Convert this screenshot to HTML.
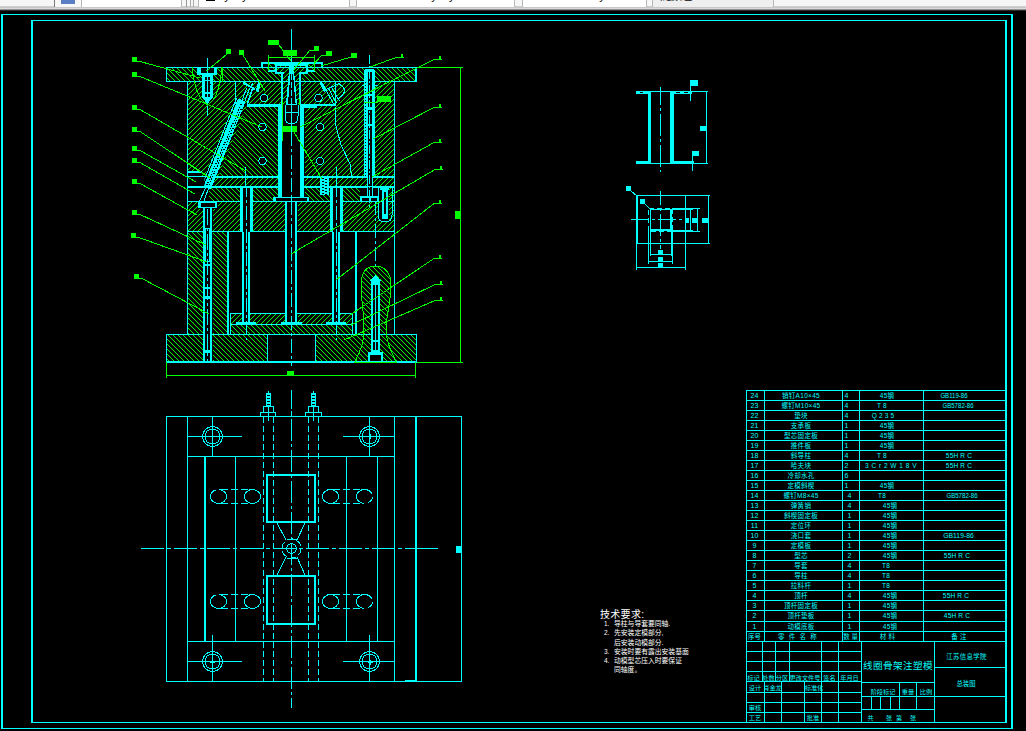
<!DOCTYPE html>
<html><head><meta charset="utf-8"><title>CAD</title>
<style>
html,body{margin:0;padding:0;background:#000;overflow:hidden}
body{width:1026px;height:731px;position:relative;font-family:"Liberation Sans","Noto Sans CJK SC",sans-serif}
#tb{position:absolute;left:0;top:0;width:1026px;height:11px;background:linear-gradient(#f6f6f6 0,#f6f6f6 6px,#a8a8a8 7px,#e4e4e4 8px,#d0d0d0 9px,#555 10px,#000 11px)}
#tb{overflow:hidden}#tb i{position:absolute;top:0;height:7px;background:#fff;border-left:1px solid #b8b8b8;border-right:1px solid #b8b8b8}#tb u,#tb b{position:absolute;top:0;height:7px}#tb span{position:absolute;top:-10px;font-size:11px;line-height:12px;color:#000;height:14px}
svg{position:absolute;left:0;top:0}
svg text{font-family:"Liberation Sans","Noto Sans CJK SC",sans-serif}
</style></head><body>
<div id="tb"><u style="left:54px;width:1px;background:#777"></u><u style="left:55px;width:26px;background:#f8f8f8"></u><i style="left:81px;width:99px"></i><u style="left:186px;width:1px;background:#999"></u><u style="left:190px;width:1px;background:#aaa"></u><u style="left:193px;width:1px;background:#aaa"></u><i style="left:198px;width:150px"></i><i style="left:356px;width:157px"></i><i style="left:522px;width:123px"></i><i style="left:652px;width:120px;background:#efefef"></i><b style="left:61px;top:0;width:14px;height:4px;background:#5b7fc4"></b><b style="left:206px;top:0;width:9px;height:1px;background:#000"></b><span style="left:217px">ByLayer</span><span style="left:424px">ByLayer</span><span style="left:592px">ByColor</span><span style="left:660px">随颜色</span></div>
<svg width="1026" height="731" viewBox="0 0 1026 731" shape-rendering="crispEdges">
<defs><clipPath id="h1"><path d="M166 67 L417 67 L417 82 L166 82Z M197 67 L217 67 L217 75 L213 75 L213 98 L207.5 104 L202 98 L202 75 L197 75Z M364 67 L375 67 L375 177 L373 177 L373 202 L367 202 L367 177 L364 177Z M275 64 L308 64 L308 74 L302 74 L302 105 L281 105 L281 74 L275 74Z M268 67 L276 67 L276 71 L268 71Z M307 67 L315 67 L315 71 L307 71Z" clip-rule="evenodd"/></clipPath>
<clipPath id="h2"><path d="M268 63 L276 63 L276 71 L268 71Z" clip-rule="evenodd"/></clipPath>
<clipPath id="h3"><path d="M307 63 L315 63 L315 71 L307 71Z" clip-rule="evenodd"/></clipPath>
<clipPath id="h4"><path d="M276 65 L307 65 L307 73 L300 73 L300 104 L282 104 L282 73 L276 73Z M290 65 L293 65 L296 104 L287 104Z" clip-rule="evenodd"/></clipPath>
<clipPath id="h5"><path d="M187 81 L395 81 L395 177 L187 177Z M197 67 L217 67 L217 75 L213 75 L213 98 L207.5 104 L202 98 L202 75 L197 75Z M364 67 L375 67 L375 177 L373 177 L373 202 L367 202 L367 177 L364 177Z M278 105 L305 105 L305 198 L278 198Z M235.21 98.08 L201.01 185.08 L210.79 188.92 L244.99 101.92Z M247 105 L279 105 L279 176 L218.5 176Z M187 171 L201 171 L201 177 L187 177Z M281 81 L302 81 L302 105 L281 105Z" clip-rule="evenodd"/></clipPath>
<clipPath id="h6"><path d="M247 105 L279 105 L279 176 L218.5 176Z M235.21 98.08 L201.01 185.08 L210.79 188.92 L244.99 101.92Z" clip-rule="evenodd"/></clipPath>
<clipPath id="h7"><path d="M212 177 L395 177 L395 187 L212 187Z M278 105 L305 105 L305 198 L278 198Z M364 67 L375 67 L375 177 L373 177 L373 202 L367 202 L367 177 L364 177Z M320 176 L329 176 L329 187 L320 187Z" clip-rule="evenodd"/></clipPath>
<clipPath id="h8"><path d="M209 187 L360 187 L360 202 L209 202Z M278 105 L305 105 L305 198 L278 198Z M240 187 L253 187 L253 232 L250 232 L250 325 L242 325 L242 232 L240 232Z M330 187 L343 187 L343 232 L340 232 L340 325 L332 325 L332 232 L330 232Z M273 197 L309 197 L309 202 L273 202Z M320 187 L329 187 L329 195 L320 195Z" clip-rule="evenodd"/></clipPath>
<clipPath id="h9"><path d="M379 187 L395 187 L395 202 L379 202Z M379 186 L389 186 L389 222 L379 222Z" clip-rule="evenodd"/></clipPath>
<clipPath id="h10"><path d="M187 202 L395 202 L395 232 L187 232Z M203 201 L213 201 L213 363 L203 363Z M198 201 L218 201 L218 209 L198 209Z M240 187 L253 187 L253 232 L250 232 L250 325 L242 325 L242 232 L240 232Z M330 187 L343 187 L343 232 L340 232 L340 325 L332 325 L332 232 L330 232Z M285 201 L298 201 L298 325 L285 325Z M379 186 L389 186 L389 222 L379 222Z" clip-rule="evenodd"/></clipPath>
<clipPath id="h11"><path d="M187 232 L229 232 L229 335 L187 335Z M203 201 L213 201 L213 363 L203 363Z" clip-rule="evenodd"/></clipPath>
<clipPath id="h12"><path d="M230 314 L352 314 L352 324 L230 324Z M240 187 L253 187 L253 232 L250 232 L250 325 L242 325 L242 232 L240 232Z M330 187 L343 187 L343 232 L340 232 L340 325 L332 325 L332 232 L330 232Z M285 201 L298 201 L298 325 L285 325Z" clip-rule="evenodd"/></clipPath>
<clipPath id="h13"><path d="M230 324 L352 324 L352 335 L230 335Z" clip-rule="evenodd"/></clipPath>
<clipPath id="h14"><path d="M166 335 L267 335 L267 363 L166 363Z M203 201 L213 201 L213 363 L203 363Z" clip-rule="evenodd"/></clipPath>
<clipPath id="h15"><path d="M316 335 L417 335 L417 363 L316 363Z M364 334 L386 334 L389 345 L397 364 L354 364 L361 345Z" clip-rule="evenodd"/></clipPath>
<clipPath id="hb"><path d="M375 266 C384 266 391 272 391 285 C391 300 387 312 386 328 C386 343 392 352 396 362 L355 362 C359 352 365 343 364 328 C364 312 361 300 361 285 C361 272 367 266 375 266Z M371 278 L380 278 L380 362 L371 362Z" clip-rule="evenodd"/></clipPath>
<clipPath id="bc"><path d="M190 95H262V190H204.5V166H190Z"/></clipPath></defs>
<rect x="1" y="14" width="2" height="715" fill="#0ff"/>
<rect x="1011" y="14" width="2" height="715" fill="#0ff"/>
<rect x="1" y="14" width="1012" height="1" fill="#0ff"/>
<rect x="1" y="728" width="1012" height="1" fill="#0ff"/>
<rect x="31" y="20" width="2" height="703" fill="#0ff"/>
<rect x="1005" y="20" width="2" height="703" fill="#0ff"/>
<rect x="31" y="20" width="976" height="1" fill="#0ff"/>
<rect x="31" y="722" width="976" height="1" fill="#0ff"/>
<rect x="746" y="390" width="260" height="1" fill="#0ff"/>
<rect x="746" y="400" width="260" height="1" fill="#0ff"/>
<rect x="746" y="410" width="260" height="1" fill="#0ff"/>
<rect x="746" y="420" width="260" height="1" fill="#0ff"/>
<rect x="746" y="430" width="260" height="1" fill="#0ff"/>
<rect x="746" y="440" width="260" height="1" fill="#0ff"/>
<rect x="746" y="450" width="260" height="1" fill="#0ff"/>
<rect x="746" y="460" width="260" height="1" fill="#0ff"/>
<rect x="746" y="470" width="260" height="1" fill="#0ff"/>
<rect x="746" y="480" width="260" height="1" fill="#0ff"/>
<rect x="746" y="490" width="260" height="1" fill="#0ff"/>
<rect x="746" y="500" width="260" height="1" fill="#0ff"/>
<rect x="746" y="510" width="260" height="1" fill="#0ff"/>
<rect x="746" y="520" width="260" height="1" fill="#0ff"/>
<rect x="746" y="530" width="260" height="1" fill="#0ff"/>
<rect x="746" y="540" width="260" height="1" fill="#0ff"/>
<rect x="746" y="550" width="260" height="1" fill="#0ff"/>
<rect x="746" y="560" width="260" height="1" fill="#0ff"/>
<rect x="746" y="570" width="260" height="1" fill="#0ff"/>
<rect x="746" y="580" width="260" height="1" fill="#0ff"/>
<rect x="746" y="590" width="260" height="1" fill="#0ff"/>
<rect x="746" y="600" width="260" height="1" fill="#0ff"/>
<rect x="746" y="610" width="260" height="1" fill="#0ff"/>
<rect x="746" y="621" width="260" height="1" fill="#0ff"/>
<rect x="746" y="631" width="260" height="1" fill="#0ff"/>
<rect x="746" y="641" width="260" height="1" fill="#0ff"/>
<rect x="746" y="390" width="1" height="252" fill="#0ff"/>
<rect x="764" y="390" width="1" height="252" fill="#0ff"/>
<rect x="842" y="390" width="1" height="252" fill="#0ff"/>
<rect x="859" y="390" width="1" height="252" fill="#0ff"/>
<rect x="923" y="390" width="1" height="252" fill="#0ff"/>
<text x="754.5" y="398.3" font-size="7" fill="#0ff" text-anchor="middle">24</text>
<text x="801" y="398.3" font-size="6.5" fill="#0ff" text-anchor="middle" letter-spacing="0.3">销钉A10×45</text>
<text x="846.5" y="398.3" font-size="7" fill="#0ff" text-anchor="middle">4</text>
<text x="887" y="398.3" font-size="6.5" fill="#0ff" text-anchor="middle" letter-spacing="0.2">45钢</text>
<text transform="translate(954,398.3) scale(0.78,1)" font-size="7.8" fill="#0ff" text-anchor="middle">GB119-86</text>
<text x="754.5" y="408.3" font-size="7" fill="#0ff" text-anchor="middle">23</text>
<text x="801" y="408.3" font-size="6.5" fill="#0ff" text-anchor="middle" letter-spacing="0.3">螺钉M10×45</text>
<text x="846.5" y="408.3" font-size="7" fill="#0ff" text-anchor="middle">4</text>
<text x="882" y="408.3" font-size="6.5" fill="#0ff" text-anchor="middle" letter-spacing="0.2">T 8</text>
<text transform="translate(958,408.3) scale(0.78,1)" font-size="7.8" fill="#0ff" text-anchor="middle">GB5782-86</text>
<text x="754.5" y="418.3" font-size="7" fill="#0ff" text-anchor="middle">22</text>
<text x="801" y="418.3" font-size="6.5" fill="#0ff" text-anchor="middle" letter-spacing="0.3">垫块</text>
<text x="846.5" y="418.3" font-size="7" fill="#0ff" text-anchor="middle">4</text>
<text x="883" y="418.3" font-size="6.5" fill="#0ff" text-anchor="middle" letter-spacing="0.2">Q 2 3 5</text>
<text x="959" y="418.3" font-size="6.5" fill="#0ff" text-anchor="middle" letter-spacing="0.2"></text>
<text x="754.5" y="428.3" font-size="7" fill="#0ff" text-anchor="middle">21</text>
<text x="801" y="428.3" font-size="6.5" fill="#0ff" text-anchor="middle" letter-spacing="0.3">支承板</text>
<text x="846.5" y="428.3" font-size="7" fill="#0ff" text-anchor="middle">1</text>
<text x="887" y="428.3" font-size="6.5" fill="#0ff" text-anchor="middle" letter-spacing="0.2">45钢</text>
<text x="959" y="428.3" font-size="6.5" fill="#0ff" text-anchor="middle" letter-spacing="0.2"></text>
<text x="754.5" y="438.3" font-size="7" fill="#0ff" text-anchor="middle">20</text>
<text x="801" y="438.3" font-size="6.5" fill="#0ff" text-anchor="middle" letter-spacing="0.3">型芯固定板</text>
<text x="846.5" y="438.3" font-size="7" fill="#0ff" text-anchor="middle">1</text>
<text x="887" y="438.3" font-size="6.5" fill="#0ff" text-anchor="middle" letter-spacing="0.2">45钢</text>
<text x="959" y="438.3" font-size="6.5" fill="#0ff" text-anchor="middle" letter-spacing="0.2"></text>
<text x="754.5" y="448.3" font-size="7" fill="#0ff" text-anchor="middle">19</text>
<text x="801" y="448.3" font-size="6.5" fill="#0ff" text-anchor="middle" letter-spacing="0.3">推件板</text>
<text x="846.5" y="448.3" font-size="7" fill="#0ff" text-anchor="middle">1</text>
<text x="887" y="448.3" font-size="6.5" fill="#0ff" text-anchor="middle" letter-spacing="0.2">45钢</text>
<text x="959" y="448.3" font-size="6.5" fill="#0ff" text-anchor="middle" letter-spacing="0.2"></text>
<text x="754.5" y="458.3" font-size="7" fill="#0ff" text-anchor="middle">18</text>
<text x="801" y="458.3" font-size="6.5" fill="#0ff" text-anchor="middle" letter-spacing="0.3">斜导柱</text>
<text x="846.5" y="458.3" font-size="7" fill="#0ff" text-anchor="middle">4</text>
<text x="882" y="458.3" font-size="6.5" fill="#0ff" text-anchor="middle" letter-spacing="0.2">T 8</text>
<text x="959" y="458.3" font-size="6.5" fill="#0ff" text-anchor="middle" letter-spacing="0.2">55H R C</text>
<text x="754.5" y="468.3" font-size="7" fill="#0ff" text-anchor="middle">17</text>
<text x="801" y="468.3" font-size="6.5" fill="#0ff" text-anchor="middle" letter-spacing="0.3">哈夫块</text>
<text x="846.5" y="468.3" font-size="7" fill="#0ff" text-anchor="middle">2</text>
<text x="891" y="468.3" font-size="6.5" fill="#0ff" text-anchor="middle" letter-spacing="0.5">3 C r 2 W 1 8 V</text>
<text x="959" y="468.3" font-size="6.5" fill="#0ff" text-anchor="middle" letter-spacing="0.2">55H R C</text>
<text x="754.5" y="478.3" font-size="7" fill="#0ff" text-anchor="middle">16</text>
<text x="801" y="478.3" font-size="6.5" fill="#0ff" text-anchor="middle" letter-spacing="0.3">冷却水孔</text>
<text x="846.5" y="478.3" font-size="7" fill="#0ff" text-anchor="middle">6</text>
<text x="887" y="478.3" font-size="6.5" fill="#0ff" text-anchor="middle" letter-spacing="0.2"></text>
<text x="959" y="478.3" font-size="6.5" fill="#0ff" text-anchor="middle" letter-spacing="0.2"></text>
<text x="754.5" y="488.3" font-size="7" fill="#0ff" text-anchor="middle">15</text>
<text x="801" y="488.3" font-size="6.5" fill="#0ff" text-anchor="middle" letter-spacing="0.3">定模斜楔</text>
<text x="846.5" y="488.3" font-size="7" fill="#0ff" text-anchor="middle">1</text>
<text x="887" y="488.3" font-size="6.5" fill="#0ff" text-anchor="middle" letter-spacing="0.2">45钢</text>
<text x="959" y="488.3" font-size="6.5" fill="#0ff" text-anchor="middle" letter-spacing="0.2"></text>
<text x="754.5" y="498.3" font-size="7" fill="#0ff" text-anchor="middle">14</text>
<text x="801" y="498.3" font-size="6.5" fill="#0ff" text-anchor="middle" letter-spacing="0.3">螺钉M8×45</text>
<text x="849.5" y="498.3" font-size="7" fill="#0ff" text-anchor="middle">4</text>
<text x="882" y="498.3" font-size="6.5" fill="#0ff" text-anchor="middle" letter-spacing="0.2">T8</text>
<text transform="translate(962,498.3) scale(0.78,1)" font-size="7.8" fill="#0ff" text-anchor="middle">GB5782-86</text>
<text x="754.5" y="508.3" font-size="7" fill="#0ff" text-anchor="middle">13</text>
<text x="801" y="508.3" font-size="6.5" fill="#0ff" text-anchor="middle" letter-spacing="0.3">弹簧销</text>
<text x="849.5" y="508.3" font-size="7" fill="#0ff" text-anchor="middle">4</text>
<text x="890" y="508.3" font-size="6.5" fill="#0ff" text-anchor="middle" letter-spacing="0.2">45钢</text>
<text x="959" y="508.3" font-size="6.5" fill="#0ff" text-anchor="middle" letter-spacing="0.2"></text>
<text x="754.5" y="518.3" font-size="7" fill="#0ff" text-anchor="middle">12</text>
<text x="801" y="518.3" font-size="6.5" fill="#0ff" text-anchor="middle" letter-spacing="0.3">斜楔固定板</text>
<text x="849.5" y="518.3" font-size="7" fill="#0ff" text-anchor="middle">1</text>
<text x="890" y="518.3" font-size="6.5" fill="#0ff" text-anchor="middle" letter-spacing="0.2">45钢</text>
<text x="959" y="518.3" font-size="6.5" fill="#0ff" text-anchor="middle" letter-spacing="0.2"></text>
<text x="754.5" y="528.3" font-size="7" fill="#0ff" text-anchor="middle">11</text>
<text x="801" y="528.3" font-size="6.5" fill="#0ff" text-anchor="middle" letter-spacing="0.3">定位环</text>
<text x="849.5" y="528.3" font-size="7" fill="#0ff" text-anchor="middle">1</text>
<text x="890" y="528.3" font-size="6.5" fill="#0ff" text-anchor="middle" letter-spacing="0.2">45钢</text>
<text x="959" y="528.3" font-size="6.5" fill="#0ff" text-anchor="middle" letter-spacing="0.2"></text>
<text x="754.5" y="538.3" font-size="7" fill="#0ff" text-anchor="middle">10</text>
<text x="801" y="538.3" font-size="6.5" fill="#0ff" text-anchor="middle" letter-spacing="0.3">浇口套</text>
<text x="849.5" y="538.3" font-size="7" fill="#0ff" text-anchor="middle">1</text>
<text x="890" y="538.3" font-size="6.5" fill="#0ff" text-anchor="middle" letter-spacing="0.2">45钢</text>
<text x="958.5" y="538.3" font-size="6.8" fill="#0ff" text-anchor="middle" letter-spacing="0">GB119-86</text>
<text x="754.5" y="548.3" font-size="7" fill="#0ff" text-anchor="middle">9</text>
<text x="801" y="548.3" font-size="6.5" fill="#0ff" text-anchor="middle" letter-spacing="0.3">定模板</text>
<text x="849.5" y="548.3" font-size="7" fill="#0ff" text-anchor="middle">1</text>
<text x="890" y="548.3" font-size="6.5" fill="#0ff" text-anchor="middle" letter-spacing="0.2">45钢</text>
<text x="959" y="548.3" font-size="6.5" fill="#0ff" text-anchor="middle" letter-spacing="0.2"></text>
<text x="754.5" y="558.3" font-size="7" fill="#0ff" text-anchor="middle">8</text>
<text x="801" y="558.3" font-size="6.5" fill="#0ff" text-anchor="middle" letter-spacing="0.3">型芯</text>
<text x="849.5" y="558.3" font-size="7" fill="#0ff" text-anchor="middle">2</text>
<text x="890" y="558.3" font-size="6.5" fill="#0ff" text-anchor="middle" letter-spacing="0.2">45钢</text>
<text x="957" y="558.3" font-size="6.5" fill="#0ff" text-anchor="middle" letter-spacing="0.2">55H R C</text>
<text x="754.5" y="568.3" font-size="7" fill="#0ff" text-anchor="middle">7</text>
<text x="801" y="568.3" font-size="6.5" fill="#0ff" text-anchor="middle" letter-spacing="0.3">导套</text>
<text x="849.5" y="568.3" font-size="7" fill="#0ff" text-anchor="middle">4</text>
<text x="886" y="568.3" font-size="6.5" fill="#0ff" text-anchor="middle" letter-spacing="0.2">T8</text>
<text x="959" y="568.3" font-size="6.5" fill="#0ff" text-anchor="middle" letter-spacing="0.2"></text>
<text x="754.5" y="578.3" font-size="7" fill="#0ff" text-anchor="middle">6</text>
<text x="801" y="578.3" font-size="6.5" fill="#0ff" text-anchor="middle" letter-spacing="0.3">导柱</text>
<text x="849.5" y="578.3" font-size="7" fill="#0ff" text-anchor="middle">4</text>
<text x="886" y="578.3" font-size="6.5" fill="#0ff" text-anchor="middle" letter-spacing="0.2">T8</text>
<text x="959" y="578.3" font-size="6.5" fill="#0ff" text-anchor="middle" letter-spacing="0.2"></text>
<text x="754.5" y="588.3" font-size="7" fill="#0ff" text-anchor="middle">5</text>
<text x="801" y="588.3" font-size="6.5" fill="#0ff" text-anchor="middle" letter-spacing="0.3">拉料杆</text>
<text x="849.5" y="588.3" font-size="7" fill="#0ff" text-anchor="middle">1</text>
<text x="886" y="588.3" font-size="6.5" fill="#0ff" text-anchor="middle" letter-spacing="0.2">T8</text>
<text x="959" y="588.3" font-size="6.5" fill="#0ff" text-anchor="middle" letter-spacing="0.2"></text>
<text x="754.5" y="598.3" font-size="7" fill="#0ff" text-anchor="middle">4</text>
<text x="801" y="598.3" font-size="6.5" fill="#0ff" text-anchor="middle" letter-spacing="0.3">顶杆</text>
<text x="849.5" y="598.3" font-size="7" fill="#0ff" text-anchor="middle">4</text>
<text x="890" y="598.3" font-size="6.5" fill="#0ff" text-anchor="middle" letter-spacing="0.2">45钢</text>
<text x="956" y="598.3" font-size="6.5" fill="#0ff" text-anchor="middle" letter-spacing="0.2">55H R C</text>
<text x="754.5" y="608.3" font-size="7" fill="#0ff" text-anchor="middle">3</text>
<text x="801" y="608.3" font-size="6.5" fill="#0ff" text-anchor="middle" letter-spacing="0.3">顶杆固定板</text>
<text x="849.5" y="608.3" font-size="7" fill="#0ff" text-anchor="middle">1</text>
<text x="890" y="608.3" font-size="6.5" fill="#0ff" text-anchor="middle" letter-spacing="0.2">45钢</text>
<text x="959" y="608.3" font-size="6.5" fill="#0ff" text-anchor="middle" letter-spacing="0.2"></text>
<text x="754.5" y="618.3" font-size="7" fill="#0ff" text-anchor="middle">2</text>
<text x="801" y="618.3" font-size="6.5" fill="#0ff" text-anchor="middle" letter-spacing="0.3">顶杆垫板</text>
<text x="849.5" y="618.3" font-size="7" fill="#0ff" text-anchor="middle">1</text>
<text x="890" y="618.3" font-size="6.5" fill="#0ff" text-anchor="middle" letter-spacing="0.2">45钢</text>
<text x="957" y="618.3" font-size="6.5" fill="#0ff" text-anchor="middle" letter-spacing="0.2">45H R C</text>
<text x="754.5" y="629.3" font-size="7" fill="#0ff" text-anchor="middle">1</text>
<text x="801" y="629.3" font-size="6.5" fill="#0ff" text-anchor="middle" letter-spacing="0.3">动模底板</text>
<text x="849.5" y="629.3" font-size="7" fill="#0ff" text-anchor="middle">1</text>
<text x="890" y="629.3" font-size="6.5" fill="#0ff" text-anchor="middle" letter-spacing="0.2">45钢</text>
<text x="959" y="629.3" font-size="6.5" fill="#0ff" text-anchor="middle" letter-spacing="0.2"></text>
<text x="754.5" y="639.3" font-size="6.4" fill="#0ff" text-anchor="middle">序号</text>
<text x="798" y="639.3" font-size="6.5" fill="#0ff" text-anchor="middle" letter-spacing="1.2">零 件 名 称</text>
<text x="850.5" y="639.3" font-size="6.4" fill="#0ff" text-anchor="middle">数 量</text>
<text x="887.5" y="639.3" font-size="6.5" fill="#0ff" text-anchor="middle" letter-spacing="0.2">材 料</text>
<text x="959" y="639.3" font-size="6.5" fill="#0ff" text-anchor="middle" letter-spacing="0.2">备  注</text>
<rect x="746" y="651" width="116" height="1" fill="#0ff"/>
<rect x="746" y="661" width="116" height="1" fill="#0ff"/>
<rect x="746" y="671" width="116" height="1" fill="#0ff"/>
<rect x="746" y="681" width="116" height="1" fill="#0ff"/>
<rect x="861" y="682" width="74" height="1" fill="#0ff"/>
<rect x="746" y="692" width="116" height="1" fill="#0ff"/>
<rect x="746" y="702" width="116" height="1" fill="#0ff"/>
<rect x="746" y="712" width="116" height="1" fill="#0ff"/>
<rect x="762" y="641" width="1" height="41" fill="#0ff"/>
<rect x="775" y="641" width="1" height="41" fill="#0ff"/>
<rect x="789" y="641" width="1" height="41" fill="#0ff"/>
<rect x="764" y="681" width="1" height="42" fill="#0ff"/>
<rect x="781" y="681" width="1" height="42" fill="#0ff"/>
<rect x="804" y="681" width="1" height="42" fill="#0ff"/>
<rect x="746" y="641" width="1" height="82" fill="#0ff"/>
<rect x="821" y="641" width="1" height="82" fill="#0ff"/>
<rect x="838" y="641" width="1" height="82" fill="#0ff"/>
<rect x="861" y="641" width="1" height="82" fill="#0ff"/>
<rect x="934" y="641" width="1" height="82" fill="#0ff"/>
<rect x="934" y="667" width="72" height="1" fill="#0ff"/>
<rect x="861" y="696" width="145" height="1" fill="#0ff"/>
<rect x="861" y="709" width="74" height="1" fill="#0ff"/>
<rect x="899" y="682" width="1" height="28" fill="#0ff"/>
<rect x="916" y="682" width="1" height="28" fill="#0ff"/>
<rect x="871" y="696" width="1" height="14" fill="#0ff"/>
<rect x="880" y="696" width="1" height="14" fill="#0ff"/>
<rect x="890" y="696" width="1" height="14" fill="#0ff"/>
<text x="753.5" y="679.5" font-size="6.2" fill="#0ff" text-anchor="middle">标记</text>
<text x="768.5" y="679.5" font-size="6.2" fill="#0ff" text-anchor="middle">处数</text>
<text x="782" y="679.5" font-size="6.2" fill="#0ff" text-anchor="middle">分区</text>
<text x="805" y="679.5" font-size="6.2" fill="#0ff" text-anchor="middle">更改文件号</text>
<text x="829.5" y="679.5" font-size="6.2" fill="#0ff" text-anchor="middle">签名</text>
<text x="849.5" y="679.5" font-size="6.2" fill="#0ff" text-anchor="middle">年月日</text>
<text x="755" y="690" font-size="6.2" fill="#0ff" text-anchor="middle">设计</text>
<text x="772.5" y="690" font-size="6.2" fill="#0ff" text-anchor="middle">肖金龙</text>
<text x="814" y="690" font-size="6.2" fill="#0ff" text-anchor="middle">标准化</text>
<text x="755" y="710" font-size="6.2" fill="#0ff" text-anchor="middle">审核</text>
<text x="755" y="720" font-size="6.2" fill="#0ff" text-anchor="middle">工艺</text>
<text x="813" y="720" font-size="6.2" fill="#0ff" text-anchor="middle">批准</text>
<text x="898" y="668.5" font-size="9.6" fill="#0ff" text-anchor="middle" letter-spacing="0.4">线圈骨架注塑模</text>
<text x="966.5" y="658.5" font-size="6.4" fill="#0ff" text-anchor="middle" letter-spacing="0.35">江苏信息学院</text>
<text x="966" y="685.5" font-size="6.3" fill="#0ff" text-anchor="middle">总装图</text>
<text x="883" y="694" font-size="6.2" fill="#0ff" text-anchor="middle">阶段标记</text>
<text x="908" y="694" font-size="6.2" fill="#0ff" text-anchor="middle">重量</text>
<text x="926" y="694" font-size="6.2" fill="#0ff" text-anchor="middle">比例</text>
<text x="870.5" y="720" font-size="6" fill="#0ff" text-anchor="middle">共</text>
<text x="889" y="720" font-size="6" fill="#0ff" text-anchor="middle">张</text>
<text x="899" y="720" font-size="6" fill="#0ff" text-anchor="middle">第</text>
<text x="913" y="720" font-size="6" fill="#0ff" text-anchor="middle">张</text>
<text x="600" y="618" font-size="10" fill="#fff" letter-spacing="0.3">技术要求:</text>
<text x="604" y="626.3" font-size="6.5" fill="#fff">1.</text>
<text x="614" y="626.3" font-size="6.8" fill="#fff">导柱与导套要同轴.</text>
<text x="604" y="635.4" font-size="6.5" fill="#fff">2.</text>
<text x="614" y="635.4" font-size="6.8" fill="#fff">先安装定模部分,</text>
<text x="614" y="644.5" font-size="6.8" fill="#fff">后安装动模部分.</text>
<text x="604" y="653.6" font-size="6.5" fill="#fff">3.</text>
<text x="614" y="653.6" font-size="6.8" fill="#fff">安装时要有露出安装基面</text>
<text x="604" y="662.7" font-size="6.5" fill="#fff">4.</text>
<text x="614" y="662.7" font-size="6.8" fill="#fff">动模型芯压入时要保证</text>
<text x="614" y="671.8" font-size="6.8" fill="#fff">同轴度。</text>
<rect x="166" y="416" width="296" height="1" fill="#0ff"/>
<rect x="166" y="681" width="296" height="1" fill="#0ff"/>
<rect x="166" y="416" width="1" height="266" fill="#0ff"/>
<rect x="461" y="416" width="1" height="266" fill="#0ff"/>
<rect x="187" y="416" width="1" height="266" fill="#0ff"/>
<rect x="394" y="416" width="1" height="266" fill="#0ff"/>
<rect x="415" y="416" width="2" height="266" fill="#0ff"/>
<rect x="187" y="456" width="208" height="1" fill="#0ff"/>
<rect x="187" y="641" width="208" height="1" fill="#0ff"/>
<rect x="204" y="456" width="2" height="186" fill="#0ff"/>
<rect x="235" y="456" width="1" height="186" fill="#0ff"/>
<rect x="346" y="456" width="1" height="186" fill="#0ff"/>
<rect x="377" y="456" width="1" height="186" fill="#0ff"/>
<rect x="405" y="680" width="11" height="2" fill="#0ff"/>
<rect x="456" y="546" width="5" height="7" fill="#0ff"/>
<circle cx="212.5" cy="436.5" r="10" fill="none" stroke="#0ff" stroke-width="1"/>
<circle cx="212.5" cy="436.5" r="7.6" fill="none" stroke="#0ff" stroke-width="1"/>
<rect x="210" y="436" width="5" height="1" fill="#0ff"/>
<rect x="212" y="434" width="1" height="5" fill="#0ff"/>
<circle cx="212.5" cy="661.5" r="10" fill="none" stroke="#0ff" stroke-width="1"/>
<circle cx="212.5" cy="661.5" r="7.6" fill="none" stroke="#0ff" stroke-width="1"/>
<rect x="210" y="662" width="5" height="1" fill="#0ff"/>
<rect x="212" y="660" width="1" height="5" fill="#0ff"/>
<circle cx="369.5" cy="436.5" r="10" fill="none" stroke="#0ff" stroke-width="1"/>
<circle cx="369.5" cy="436.5" r="7.6" fill="none" stroke="#0ff" stroke-width="1"/>
<rect x="368" y="436" width="5" height="1" fill="#0ff"/>
<rect x="370" y="434" width="1" height="5" fill="#0ff"/>
<circle cx="369.5" cy="661.5" r="10" fill="none" stroke="#0ff" stroke-width="1"/>
<circle cx="369.5" cy="661.5" r="7.6" fill="none" stroke="#0ff" stroke-width="1"/>
<rect x="368" y="662" width="5" height="1" fill="#0ff"/>
<rect x="370" y="660" width="1" height="5" fill="#0ff"/>
<rect x="187" y="436" width="55" height="1" fill="#0ff"/>
<rect x="343" y="436" width="52" height="1" fill="#0ff"/>
<rect x="187" y="661" width="55" height="1" fill="#0ff"/>
<rect x="343" y="661" width="52" height="1" fill="#0ff"/>
<rect x="212" y="416" width="1" height="41" fill="#0ff"/>
<rect x="369" y="416" width="1" height="41" fill="#0ff"/>
<rect x="212" y="635" width="1" height="47" fill="#0ff"/>
<rect x="369" y="635" width="1" height="47" fill="#0ff"/>
<rect x="263" y="417" width="1" height="6" fill="#0ff"/>
<rect x="263" y="426" width="1" height="6" fill="#0ff"/>
<rect x="263" y="435" width="1" height="6" fill="#0ff"/>
<rect x="263" y="444" width="1" height="6" fill="#0ff"/>
<rect x="263" y="453" width="1" height="6" fill="#0ff"/>
<rect x="263" y="462" width="1" height="6" fill="#0ff"/>
<rect x="263" y="471" width="1" height="6" fill="#0ff"/>
<rect x="263" y="480" width="1" height="6" fill="#0ff"/>
<rect x="263" y="489" width="1" height="6" fill="#0ff"/>
<rect x="263" y="498" width="1" height="6" fill="#0ff"/>
<rect x="263" y="507" width="1" height="6" fill="#0ff"/>
<rect x="263" y="516" width="1" height="6" fill="#0ff"/>
<rect x="263" y="525" width="1" height="6" fill="#0ff"/>
<rect x="263" y="534" width="1" height="6" fill="#0ff"/>
<rect x="263" y="543" width="1" height="6" fill="#0ff"/>
<rect x="263" y="552" width="1" height="6" fill="#0ff"/>
<rect x="263" y="561" width="1" height="6" fill="#0ff"/>
<rect x="263" y="570" width="1" height="6" fill="#0ff"/>
<rect x="263" y="579" width="1" height="6" fill="#0ff"/>
<rect x="263" y="588" width="1" height="6" fill="#0ff"/>
<rect x="263" y="597" width="1" height="6" fill="#0ff"/>
<rect x="263" y="606" width="1" height="6" fill="#0ff"/>
<rect x="263" y="615" width="1" height="6" fill="#0ff"/>
<rect x="263" y="624" width="1" height="6" fill="#0ff"/>
<rect x="263" y="633" width="1" height="6" fill="#0ff"/>
<rect x="263" y="642" width="1" height="6" fill="#0ff"/>
<rect x="263" y="651" width="1" height="6" fill="#0ff"/>
<rect x="263" y="660" width="1" height="6" fill="#0ff"/>
<rect x="263" y="669" width="1" height="6" fill="#0ff"/>
<rect x="263" y="678" width="1" height="3" fill="#0ff"/>
<rect x="273" y="417" width="1" height="6" fill="#0ff"/>
<rect x="273" y="426" width="1" height="6" fill="#0ff"/>
<rect x="273" y="435" width="1" height="6" fill="#0ff"/>
<rect x="273" y="444" width="1" height="6" fill="#0ff"/>
<rect x="273" y="453" width="1" height="6" fill="#0ff"/>
<rect x="273" y="462" width="1" height="6" fill="#0ff"/>
<rect x="273" y="471" width="1" height="6" fill="#0ff"/>
<rect x="273" y="480" width="1" height="6" fill="#0ff"/>
<rect x="273" y="489" width="1" height="6" fill="#0ff"/>
<rect x="273" y="498" width="1" height="6" fill="#0ff"/>
<rect x="273" y="507" width="1" height="6" fill="#0ff"/>
<rect x="273" y="516" width="1" height="6" fill="#0ff"/>
<rect x="273" y="525" width="1" height="6" fill="#0ff"/>
<rect x="273" y="534" width="1" height="6" fill="#0ff"/>
<rect x="273" y="543" width="1" height="6" fill="#0ff"/>
<rect x="273" y="552" width="1" height="6" fill="#0ff"/>
<rect x="273" y="561" width="1" height="6" fill="#0ff"/>
<rect x="273" y="570" width="1" height="6" fill="#0ff"/>
<rect x="273" y="579" width="1" height="6" fill="#0ff"/>
<rect x="273" y="588" width="1" height="6" fill="#0ff"/>
<rect x="273" y="597" width="1" height="6" fill="#0ff"/>
<rect x="273" y="606" width="1" height="6" fill="#0ff"/>
<rect x="273" y="615" width="1" height="6" fill="#0ff"/>
<rect x="273" y="624" width="1" height="6" fill="#0ff"/>
<rect x="273" y="633" width="1" height="6" fill="#0ff"/>
<rect x="273" y="642" width="1" height="6" fill="#0ff"/>
<rect x="273" y="651" width="1" height="6" fill="#0ff"/>
<rect x="273" y="660" width="1" height="6" fill="#0ff"/>
<rect x="273" y="669" width="1" height="6" fill="#0ff"/>
<rect x="273" y="678" width="1" height="3" fill="#0ff"/>
<rect x="308" y="417" width="1" height="6" fill="#0ff"/>
<rect x="308" y="426" width="1" height="6" fill="#0ff"/>
<rect x="308" y="435" width="1" height="6" fill="#0ff"/>
<rect x="308" y="444" width="1" height="6" fill="#0ff"/>
<rect x="308" y="453" width="1" height="6" fill="#0ff"/>
<rect x="308" y="462" width="1" height="6" fill="#0ff"/>
<rect x="308" y="471" width="1" height="6" fill="#0ff"/>
<rect x="308" y="480" width="1" height="6" fill="#0ff"/>
<rect x="308" y="489" width="1" height="6" fill="#0ff"/>
<rect x="308" y="498" width="1" height="6" fill="#0ff"/>
<rect x="308" y="507" width="1" height="6" fill="#0ff"/>
<rect x="308" y="516" width="1" height="6" fill="#0ff"/>
<rect x="308" y="525" width="1" height="6" fill="#0ff"/>
<rect x="308" y="534" width="1" height="6" fill="#0ff"/>
<rect x="308" y="543" width="1" height="6" fill="#0ff"/>
<rect x="308" y="552" width="1" height="6" fill="#0ff"/>
<rect x="308" y="561" width="1" height="6" fill="#0ff"/>
<rect x="308" y="570" width="1" height="6" fill="#0ff"/>
<rect x="308" y="579" width="1" height="6" fill="#0ff"/>
<rect x="308" y="588" width="1" height="6" fill="#0ff"/>
<rect x="308" y="597" width="1" height="6" fill="#0ff"/>
<rect x="308" y="606" width="1" height="6" fill="#0ff"/>
<rect x="308" y="615" width="1" height="6" fill="#0ff"/>
<rect x="308" y="624" width="1" height="6" fill="#0ff"/>
<rect x="308" y="633" width="1" height="6" fill="#0ff"/>
<rect x="308" y="642" width="1" height="6" fill="#0ff"/>
<rect x="308" y="651" width="1" height="6" fill="#0ff"/>
<rect x="308" y="660" width="1" height="6" fill="#0ff"/>
<rect x="308" y="669" width="1" height="6" fill="#0ff"/>
<rect x="308" y="678" width="1" height="3" fill="#0ff"/>
<rect x="318" y="417" width="1" height="6" fill="#0ff"/>
<rect x="318" y="426" width="1" height="6" fill="#0ff"/>
<rect x="318" y="435" width="1" height="6" fill="#0ff"/>
<rect x="318" y="444" width="1" height="6" fill="#0ff"/>
<rect x="318" y="453" width="1" height="6" fill="#0ff"/>
<rect x="318" y="462" width="1" height="6" fill="#0ff"/>
<rect x="318" y="471" width="1" height="6" fill="#0ff"/>
<rect x="318" y="480" width="1" height="6" fill="#0ff"/>
<rect x="318" y="489" width="1" height="6" fill="#0ff"/>
<rect x="318" y="498" width="1" height="6" fill="#0ff"/>
<rect x="318" y="507" width="1" height="6" fill="#0ff"/>
<rect x="318" y="516" width="1" height="6" fill="#0ff"/>
<rect x="318" y="525" width="1" height="6" fill="#0ff"/>
<rect x="318" y="534" width="1" height="6" fill="#0ff"/>
<rect x="318" y="543" width="1" height="6" fill="#0ff"/>
<rect x="318" y="552" width="1" height="6" fill="#0ff"/>
<rect x="318" y="561" width="1" height="6" fill="#0ff"/>
<rect x="318" y="570" width="1" height="6" fill="#0ff"/>
<rect x="318" y="579" width="1" height="6" fill="#0ff"/>
<rect x="318" y="588" width="1" height="6" fill="#0ff"/>
<rect x="318" y="597" width="1" height="6" fill="#0ff"/>
<rect x="318" y="606" width="1" height="6" fill="#0ff"/>
<rect x="318" y="615" width="1" height="6" fill="#0ff"/>
<rect x="318" y="624" width="1" height="6" fill="#0ff"/>
<rect x="318" y="633" width="1" height="6" fill="#0ff"/>
<rect x="318" y="642" width="1" height="6" fill="#0ff"/>
<rect x="318" y="651" width="1" height="6" fill="#0ff"/>
<rect x="318" y="660" width="1" height="6" fill="#0ff"/>
<rect x="318" y="669" width="1" height="6" fill="#0ff"/>
<rect x="318" y="678" width="1" height="3" fill="#0ff"/>
<rect x="291" y="390" width="1" height="19" fill="#0ff"/>
<rect x="291" y="411" width="1" height="6" fill="#0ff"/>
<rect x="291" y="419" width="1" height="22" fill="#0ff"/>
<rect x="291" y="444" width="1" height="3" fill="#0ff"/>
<rect x="291" y="450" width="1" height="22" fill="#0ff"/>
<rect x="291" y="475" width="1" height="3" fill="#0ff"/>
<rect x="291" y="481" width="1" height="22" fill="#0ff"/>
<rect x="291" y="506" width="1" height="3" fill="#0ff"/>
<rect x="291" y="512" width="1" height="22" fill="#0ff"/>
<rect x="291" y="537" width="1" height="3" fill="#0ff"/>
<rect x="291" y="543" width="1" height="22" fill="#0ff"/>
<rect x="291" y="568" width="1" height="3" fill="#0ff"/>
<rect x="291" y="574" width="1" height="22" fill="#0ff"/>
<rect x="291" y="599" width="1" height="3" fill="#0ff"/>
<rect x="291" y="605" width="1" height="22" fill="#0ff"/>
<rect x="291" y="630" width="1" height="3" fill="#0ff"/>
<rect x="291" y="636" width="1" height="22" fill="#0ff"/>
<rect x="291" y="661" width="1" height="3" fill="#0ff"/>
<rect x="291" y="667" width="1" height="22" fill="#0ff"/>
<rect x="291" y="692" width="1" height="3" fill="#0ff"/>
<rect x="291" y="698" width="1" height="10" fill="#0ff"/>
<rect x="141" y="548" width="23" height="1" fill="#0ff"/>
<rect x="167" y="548" width="4" height="1" fill="#0ff"/>
<rect x="174" y="548" width="23" height="1" fill="#0ff"/>
<rect x="200" y="548" width="4" height="1" fill="#0ff"/>
<rect x="207" y="548" width="23" height="1" fill="#0ff"/>
<rect x="233" y="548" width="4" height="1" fill="#0ff"/>
<rect x="240" y="548" width="23" height="1" fill="#0ff"/>
<rect x="266" y="548" width="4" height="1" fill="#0ff"/>
<rect x="273" y="548" width="23" height="1" fill="#0ff"/>
<rect x="299" y="548" width="4" height="1" fill="#0ff"/>
<rect x="306" y="548" width="23" height="1" fill="#0ff"/>
<rect x="332" y="548" width="4" height="1" fill="#0ff"/>
<rect x="339" y="548" width="23" height="1" fill="#0ff"/>
<rect x="365" y="548" width="4" height="1" fill="#0ff"/>
<rect x="372" y="548" width="23" height="1" fill="#0ff"/>
<rect x="398" y="548" width="4" height="1" fill="#0ff"/>
<rect x="405" y="548" width="23" height="1" fill="#0ff"/>
<rect x="431" y="548" width="4" height="1" fill="#0ff"/>
<rect x="417" y="548" width="21" height="1" fill="#0ff"/>
<rect x="266" y="474" width="2" height="49" fill="#0ff"/>
<rect x="314" y="474" width="2" height="49" fill="#0ff"/>
<rect x="266" y="474" width="50" height="2" fill="#0ff"/>
<rect x="266" y="521" width="50" height="2" fill="#0ff"/>
<rect x="266" y="575" width="2" height="50" fill="#0ff"/>
<rect x="314" y="575" width="2" height="50" fill="#0ff"/>
<rect x="266" y="575" width="50" height="2" fill="#0ff"/>
<rect x="266" y="623" width="50" height="2" fill="#0ff"/>
<circle cx="291.5" cy="548.5" r="4.8" fill="none" stroke="#0ff" stroke-width="1"/>
<circle cx="291.5" cy="548.5" r="9.6" fill="none" stroke="#0ff" stroke-width="1" stroke-dasharray="7 3"/>
<line x1="277" y1="523" x2="286" y2="540" stroke="#0ff" stroke-width="1"/>
<line x1="305" y1="523" x2="297" y2="540" stroke="#0ff" stroke-width="1"/>
<line x1="277" y1="575" x2="286" y2="557" stroke="#0ff" stroke-width="1"/>
<line x1="305" y1="575" x2="297" y2="557" stroke="#0ff" stroke-width="1"/>
<rect x="287" y="539" width="10" height="1" fill="#0ff"/>
<rect x="287" y="558" width="10" height="1" fill="#0ff"/>
<ellipse cx="218.5" cy="496.5" rx="8" ry="7" fill="none" stroke="#0ff" stroke-width="1" stroke-dasharray="32 4 11 0"/>
<ellipse cx="252.5" cy="496.5" rx="8" ry="7" fill="none" stroke="#0ff" stroke-width="1"/>
<rect x="221" y="489" width="7" height="1" fill="#0ff"/>
<rect x="231" y="489" width="7" height="1" fill="#0ff"/>
<rect x="241" y="489" width="7" height="1" fill="#0ff"/>
<rect x="221" y="503" width="7" height="1" fill="#0ff"/>
<rect x="231" y="503" width="7" height="1" fill="#0ff"/>
<rect x="241" y="503" width="7" height="1" fill="#0ff"/>
<ellipse cx="330.5" cy="496.5" rx="8" ry="7" fill="none" stroke="#0ff" stroke-width="1"/>
<ellipse cx="364.5" cy="496.5" rx="8" ry="7" fill="none" stroke="#0ff" stroke-width="1" stroke-dasharray="8 4 32 3"/>
<rect x="333" y="489" width="7" height="1" fill="#0ff"/>
<rect x="343" y="489" width="7" height="1" fill="#0ff"/>
<rect x="353" y="489" width="7" height="1" fill="#0ff"/>
<rect x="333" y="503" width="7" height="1" fill="#0ff"/>
<rect x="343" y="503" width="7" height="1" fill="#0ff"/>
<rect x="353" y="503" width="7" height="1" fill="#0ff"/>
<ellipse cx="218.5" cy="601.5" rx="8" ry="7" fill="none" stroke="#0ff" stroke-width="1" stroke-dasharray="32 4 11 0"/>
<ellipse cx="252.5" cy="601.5" rx="8" ry="7" fill="none" stroke="#0ff" stroke-width="1"/>
<rect x="221" y="594" width="7" height="1" fill="#0ff"/>
<rect x="231" y="594" width="7" height="1" fill="#0ff"/>
<rect x="241" y="594" width="7" height="1" fill="#0ff"/>
<rect x="221" y="608" width="7" height="1" fill="#0ff"/>
<rect x="231" y="608" width="7" height="1" fill="#0ff"/>
<rect x="241" y="608" width="7" height="1" fill="#0ff"/>
<ellipse cx="330.5" cy="601.5" rx="8" ry="7" fill="none" stroke="#0ff" stroke-width="1"/>
<ellipse cx="364.5" cy="601.5" rx="8" ry="7" fill="none" stroke="#0ff" stroke-width="1" stroke-dasharray="8 4 32 3"/>
<rect x="333" y="594" width="7" height="1" fill="#0ff"/>
<rect x="343" y="594" width="7" height="1" fill="#0ff"/>
<rect x="353" y="594" width="7" height="1" fill="#0ff"/>
<rect x="333" y="608" width="7" height="1" fill="#0ff"/>
<rect x="343" y="608" width="7" height="1" fill="#0ff"/>
<rect x="353" y="608" width="7" height="1" fill="#0ff"/>
<rect x="260" y="412" width="16" height="1" fill="#0ff"/>
<rect x="260" y="416" width="16" height="1" fill="#0ff"/>
<rect x="260" y="412" width="1" height="5" fill="#0ff"/>
<rect x="275" y="412" width="1" height="5" fill="#0ff"/>
<rect x="263" y="406" width="11" height="1" fill="#0ff"/>
<rect x="263" y="412" width="11" height="1" fill="#0ff"/>
<rect x="263" y="406" width="1" height="7" fill="#0ff"/>
<rect x="273" y="406" width="1" height="7" fill="#0ff"/>
<rect x="266" y="393" width="5" height="13" fill="#0ff"/>
<rect x="268" y="391" width="1" height="30" fill="#0ff"/>
<rect x="267" y="395" width="3" height="1" fill="#000"/>
<rect x="267" y="398" width="3" height="1" fill="#000"/>
<rect x="267" y="401" width="3" height="1" fill="#000"/>
<rect x="267" y="404" width="3" height="1" fill="#000"/>
<rect x="305" y="412" width="17" height="1" fill="#0ff"/>
<rect x="305" y="416" width="17" height="1" fill="#0ff"/>
<rect x="305" y="412" width="1" height="5" fill="#0ff"/>
<rect x="321" y="412" width="1" height="5" fill="#0ff"/>
<rect x="308" y="406" width="11" height="1" fill="#0ff"/>
<rect x="308" y="412" width="11" height="1" fill="#0ff"/>
<rect x="308" y="406" width="1" height="7" fill="#0ff"/>
<rect x="318" y="406" width="1" height="7" fill="#0ff"/>
<rect x="311" y="393" width="5" height="13" fill="#0ff"/>
<rect x="313" y="391" width="1" height="30" fill="#0ff"/>
<rect x="312" y="395" width="3" height="1" fill="#000"/>
<rect x="312" y="398" width="3" height="1" fill="#000"/>
<rect x="312" y="401" width="3" height="1" fill="#000"/>
<rect x="312" y="404" width="3" height="1" fill="#000"/>
<rect x="636" y="91" width="72" height="1" fill="#0ff"/>
<rect x="636" y="91" width="15" height="3" fill="#0ff"/>
<rect x="670" y="91" width="22" height="3" fill="#0ff"/>
<rect x="640" y="92" width="3" height="1" fill="#000"/>
<rect x="676" y="92" width="4" height="1" fill="#000"/>
<rect x="684" y="92" width="4" height="1" fill="#000"/>
<rect x="636" y="163" width="72" height="1" fill="#0ff"/>
<rect x="636" y="161" width="15" height="3" fill="#0ff"/>
<rect x="670" y="161" width="24" height="3" fill="#0ff"/>
<rect x="648" y="91" width="3" height="73" fill="#0ff"/>
<rect x="670" y="91" width="4" height="73" fill="#0ff"/>
<rect x="660" y="87" width="1" height="18" fill="#0ff"/>
<rect x="660" y="108" width="1" height="3" fill="#0ff"/>
<rect x="660" y="114" width="1" height="22" fill="#0ff"/>
<rect x="660" y="139" width="1" height="3" fill="#0ff"/>
<rect x="660" y="145" width="1" height="22" fill="#0ff"/>
<rect x="660" y="170" width="1" height="2" fill="#0ff"/>
<rect x="706" y="91" width="1" height="73" fill="#0ff"/>
<rect x="690" y="80" width="8" height="6" fill="#0ff"/>
<rect x="690" y="86" width="1" height="15" fill="#0ff"/>
<rect x="700" y="126" width="6" height="5" fill="#0ff"/>
<rect x="692" y="151" width="7" height="5" fill="#0ff"/>
<rect x="692" y="156" width="1" height="15" fill="#0ff"/>
<rect x="636" y="195" width="50" height="1" fill="#0ff"/>
<rect x="636" y="243" width="50" height="1" fill="#0ff"/>
<rect x="636" y="195" width="1" height="49" fill="#0ff"/>
<rect x="685" y="195" width="1" height="49" fill="#0ff"/>
<rect x="637" y="195" width="1" height="49" fill="#0ff"/>
<rect x="685" y="195" width="25" height="1" fill="#0ff"/>
<rect x="685" y="243" width="25" height="1" fill="#0ff"/>
<rect x="708" y="195" width="1" height="49" fill="#0ff"/>
<rect x="702" y="218" width="6" height="5" fill="#0ff"/>
<rect x="650" y="209" width="22" height="1" fill="#0ff"/>
<rect x="650" y="230" width="22" height="1" fill="#0ff"/>
<rect x="650" y="209" width="1" height="22" fill="#0ff"/>
<rect x="671" y="209" width="1" height="22" fill="#0ff"/>
<rect x="670" y="209" width="1" height="22" fill="#0ff"/>
<rect x="650" y="229" width="22" height="1" fill="#0ff"/>
<polygon points="648.5,208.5 672.5,208.5 672.5,231.5 648.5,231.5" fill="none" stroke="#0ff" stroke-width="1" stroke-dasharray="5 3"/>
<rect x="672" y="208" width="28" height="1" fill="#0ff"/>
<rect x="671" y="209" width="22" height="1" fill="#0ff"/>
<rect x="671" y="230" width="22" height="1" fill="#0ff"/>
<rect x="672" y="231" width="28" height="1" fill="#0ff"/>
<rect x="690" y="209" width="1" height="22" fill="#0ff"/>
<rect x="697" y="208" width="1" height="24" fill="#0ff"/>
<rect x="686" y="218" width="3" height="5" fill="#0ff"/>
<rect x="692" y="218" width="5" height="5" fill="#0ff"/>
<rect x="660" y="191" width="1" height="14" fill="#0ff"/>
<rect x="660" y="208" width="1" height="3" fill="#0ff"/>
<rect x="660" y="214" width="1" height="22" fill="#0ff"/>
<rect x="660" y="239" width="1" height="3" fill="#0ff"/>
<rect x="660" y="245" width="1" height="4" fill="#0ff"/>
<rect x="631" y="219" width="18" height="1" fill="#0ff"/>
<rect x="652" y="219" width="3" height="1" fill="#0ff"/>
<rect x="658" y="219" width="18" height="1" fill="#0ff"/>
<rect x="679" y="219" width="3" height="1" fill="#0ff"/>
<rect x="685" y="219" width="1" height="1" fill="#0ff"/>
<rect x="636" y="243" width="1" height="27" fill="#0ff"/>
<rect x="685" y="243" width="1" height="27" fill="#0ff"/>
<rect x="648" y="231" width="1" height="33" fill="#0ff"/>
<rect x="672" y="231" width="1" height="33" fill="#0ff"/>
<rect x="650" y="230" width="1" height="26" fill="#0ff"/>
<rect x="671" y="230" width="1" height="26" fill="#0ff"/>
<rect x="650" y="254" width="22" height="1" fill="#0ff"/>
<rect x="648" y="261" width="25" height="1" fill="#0ff"/>
<rect x="636" y="267" width="50" height="1" fill="#0ff"/>
<rect x="658" y="250" width="5" height="4" fill="#0ff"/>
<rect x="658" y="257" width="5" height="4" fill="#0ff"/>
<rect x="658" y="263" width="5" height="4" fill="#0ff"/>
<rect x="626" y="186" width="5" height="5" fill="#0ff"/>
<line x1="631" y1="191" x2="637" y2="196" stroke="#0ff" stroke-width="1"/>
<rect x="640" y="199" width="5" height="5" fill="#0ff"/>
<line x1="645" y1="204" x2="649" y2="208" stroke="#0ff" stroke-width="1"/>
<path clip-path="url(#h1)" d="M151.5 67.5L166.5 82.5M156.5 67.5L171.5 82.5M161.5 67.5L176.5 82.5M166.5 67.5L181.5 82.5M171.5 67.5L186.5 82.5M176.5 67.5L191.5 82.5M181.5 67.5L196.5 82.5M186.5 67.5L201.5 82.5M191.5 67.5L206.5 82.5M196.5 67.5L211.5 82.5M201.5 67.5L216.5 82.5M206.5 67.5L221.5 82.5M211.5 67.5L226.5 82.5M216.5 67.5L231.5 82.5M221.5 67.5L236.5 82.5M226.5 67.5L241.5 82.5M231.5 67.5L246.5 82.5M236.5 67.5L251.5 82.5M241.5 67.5L256.5 82.5M246.5 67.5L261.5 82.5M251.5 67.5L266.5 82.5M256.5 67.5L271.5 82.5M261.5 67.5L276.5 82.5M266.5 67.5L281.5 82.5M271.5 67.5L286.5 82.5M276.5 67.5L291.5 82.5M281.5 67.5L296.5 82.5M286.5 67.5L301.5 82.5M291.5 67.5L306.5 82.5M296.5 67.5L311.5 82.5M301.5 67.5L316.5 82.5M306.5 67.5L321.5 82.5M311.5 67.5L326.5 82.5M316.5 67.5L331.5 82.5M321.5 67.5L336.5 82.5M326.5 67.5L341.5 82.5M331.5 67.5L346.5 82.5M336.5 67.5L351.5 82.5M341.5 67.5L356.5 82.5M346.5 67.5L361.5 82.5M351.5 67.5L366.5 82.5M356.5 67.5L371.5 82.5M361.5 67.5L376.5 82.5M366.5 67.5L381.5 82.5M371.5 67.5L386.5 82.5M376.5 67.5L391.5 82.5M381.5 67.5L396.5 82.5M386.5 67.5L401.5 82.5M391.5 67.5L406.5 82.5M396.5 67.5L411.5 82.5M401.5 67.5L416.5 82.5M406.5 67.5L421.5 82.5M411.5 67.5L426.5 82.5M416.5 67.5L431.5 82.5" stroke="#0f0" stroke-width="1" fill="none"/>
<path clip-path="url(#h2)" d="M258.5 63.5L266.5 71.5M263.5 63.5L271.5 71.5M268.5 63.5L276.5 71.5M273.5 63.5L281.5 71.5" stroke="#0f0" stroke-width="1" fill="none"/>
<path clip-path="url(#h3)" d="M297.5 63.5L305.5 71.5M302.5 63.5L310.5 71.5M307.5 63.5L315.5 71.5M312.5 63.5L320.5 71.5" stroke="#0f0" stroke-width="1" fill="none"/>
<path clip-path="url(#h4)" d="M237.5 104.5L276.5 65.5M242.5 104.5L281.5 65.5M247.5 104.5L286.5 65.5M252.5 104.5L291.5 65.5M257.5 104.5L296.5 65.5M262.5 104.5L301.5 65.5M267.5 104.5L306.5 65.5M272.5 104.5L311.5 65.5M277.5 104.5L316.5 65.5M282.5 104.5L321.5 65.5M287.5 104.5L326.5 65.5M292.5 104.5L331.5 65.5M297.5 104.5L336.5 65.5M302.5 104.5L341.5 65.5" stroke="#0f0" stroke-width="1" fill="none"/>
<path clip-path="url(#h5)" d="M90.5 177.5L186.5 81.5M95.5 177.5L191.5 81.5M100.5 177.5L196.5 81.5M105.5 177.5L201.5 81.5M110.5 177.5L206.5 81.5M115.5 177.5L211.5 81.5M120.5 177.5L216.5 81.5M125.5 177.5L221.5 81.5M130.5 177.5L226.5 81.5M135.5 177.5L231.5 81.5M140.5 177.5L236.5 81.5M145.5 177.5L241.5 81.5M150.5 177.5L246.5 81.5M155.5 177.5L251.5 81.5M160.5 177.5L256.5 81.5M165.5 177.5L261.5 81.5M170.5 177.5L266.5 81.5M175.5 177.5L271.5 81.5M180.5 177.5L276.5 81.5M185.5 177.5L281.5 81.5M190.5 177.5L286.5 81.5M195.5 177.5L291.5 81.5M200.5 177.5L296.5 81.5M205.5 177.5L301.5 81.5M210.5 177.5L306.5 81.5M215.5 177.5L311.5 81.5M220.5 177.5L316.5 81.5M225.5 177.5L321.5 81.5M230.5 177.5L326.5 81.5M235.5 177.5L331.5 81.5M240.5 177.5L336.5 81.5M245.5 177.5L341.5 81.5M250.5 177.5L346.5 81.5M255.5 177.5L351.5 81.5M260.5 177.5L356.5 81.5M265.5 177.5L361.5 81.5M270.5 177.5L366.5 81.5M275.5 177.5L371.5 81.5M280.5 177.5L376.5 81.5M285.5 177.5L381.5 81.5M290.5 177.5L386.5 81.5M295.5 177.5L391.5 81.5M300.5 177.5L396.5 81.5M305.5 177.5L401.5 81.5M310.5 177.5L406.5 81.5M315.5 177.5L411.5 81.5M320.5 177.5L416.5 81.5M325.5 177.5L421.5 81.5M330.5 177.5L426.5 81.5M335.5 177.5L431.5 81.5M340.5 177.5L436.5 81.5M345.5 177.5L441.5 81.5M350.5 177.5L446.5 81.5M355.5 177.5L451.5 81.5M360.5 177.5L456.5 81.5M365.5 177.5L461.5 81.5M370.5 177.5L466.5 81.5M375.5 177.5L471.5 81.5M380.5 177.5L476.5 81.5M385.5 177.5L481.5 81.5M390.5 177.5L486.5 81.5" stroke="#0f0" stroke-width="1" fill="none"/>
<path clip-path="url(#h6)" d="M147.5 105.5L218.5 176.5M152.5 105.5L223.5 176.5M157.5 105.5L228.5 176.5M162.5 105.5L233.5 176.5M167.5 105.5L238.5 176.5M172.5 105.5L243.5 176.5M177.5 105.5L248.5 176.5M182.5 105.5L253.5 176.5M187.5 105.5L258.5 176.5M192.5 105.5L263.5 176.5M197.5 105.5L268.5 176.5M202.5 105.5L273.5 176.5M207.5 105.5L278.5 176.5M212.5 105.5L283.5 176.5M217.5 105.5L288.5 176.5M222.5 105.5L293.5 176.5M227.5 105.5L298.5 176.5M232.5 105.5L303.5 176.5M237.5 105.5L308.5 176.5M242.5 105.5L313.5 176.5M247.5 105.5L318.5 176.5M252.5 105.5L323.5 176.5M257.5 105.5L328.5 176.5M262.5 105.5L333.5 176.5M267.5 105.5L338.5 176.5M272.5 105.5L343.5 176.5M277.5 105.5L348.5 176.5" stroke="#0f0" stroke-width="1" fill="none"/>
<path clip-path="url(#h7)" d="M198.5 187.5L208.5 177.5M203.5 187.5L213.5 177.5M208.5 187.5L218.5 177.5M213.5 187.5L223.5 177.5M218.5 187.5L228.5 177.5M223.5 187.5L233.5 177.5M228.5 187.5L238.5 177.5M233.5 187.5L243.5 177.5M238.5 187.5L248.5 177.5M243.5 187.5L253.5 177.5M248.5 187.5L258.5 177.5M253.5 187.5L263.5 177.5M258.5 187.5L268.5 177.5M263.5 187.5L273.5 177.5M268.5 187.5L278.5 177.5M273.5 187.5L283.5 177.5M278.5 187.5L288.5 177.5M283.5 187.5L293.5 177.5M288.5 187.5L298.5 177.5M293.5 187.5L303.5 177.5M298.5 187.5L308.5 177.5M303.5 187.5L313.5 177.5M308.5 187.5L318.5 177.5M313.5 187.5L323.5 177.5M318.5 187.5L328.5 177.5M323.5 187.5L333.5 177.5M328.5 187.5L338.5 177.5M333.5 187.5L343.5 177.5M338.5 187.5L348.5 177.5M343.5 187.5L353.5 177.5M348.5 187.5L358.5 177.5M353.5 187.5L363.5 177.5M358.5 187.5L368.5 177.5M363.5 187.5L373.5 177.5M368.5 187.5L378.5 177.5M373.5 187.5L383.5 177.5M378.5 187.5L388.5 177.5M383.5 187.5L393.5 177.5M388.5 187.5L398.5 177.5M393.5 187.5L403.5 177.5" stroke="#0f0" stroke-width="1" fill="none"/>
<path clip-path="url(#h8)" d="M190.5 187.5L205.5 202.5M195.5 187.5L210.5 202.5M200.5 187.5L215.5 202.5M205.5 187.5L220.5 202.5M210.5 187.5L225.5 202.5M215.5 187.5L230.5 202.5M220.5 187.5L235.5 202.5M225.5 187.5L240.5 202.5M230.5 187.5L245.5 202.5M235.5 187.5L250.5 202.5M240.5 187.5L255.5 202.5M245.5 187.5L260.5 202.5M250.5 187.5L265.5 202.5M255.5 187.5L270.5 202.5M260.5 187.5L275.5 202.5M265.5 187.5L280.5 202.5M270.5 187.5L285.5 202.5M275.5 187.5L290.5 202.5M280.5 187.5L295.5 202.5M285.5 187.5L300.5 202.5M290.5 187.5L305.5 202.5M295.5 187.5L310.5 202.5M300.5 187.5L315.5 202.5M305.5 187.5L320.5 202.5M310.5 187.5L325.5 202.5M315.5 187.5L330.5 202.5M320.5 187.5L335.5 202.5M325.5 187.5L340.5 202.5M330.5 187.5L345.5 202.5M335.5 187.5L350.5 202.5M340.5 187.5L355.5 202.5M345.5 187.5L360.5 202.5M350.5 187.5L365.5 202.5M355.5 187.5L370.5 202.5" stroke="#0f0" stroke-width="1" fill="none"/>
<path clip-path="url(#h9)" d="M361.5 202.5L376.5 187.5M366.5 202.5L381.5 187.5M371.5 202.5L386.5 187.5M376.5 202.5L391.5 187.5M381.5 202.5L396.5 187.5M386.5 202.5L401.5 187.5M391.5 202.5L406.5 187.5" stroke="#0f0" stroke-width="1" fill="none"/>
<path clip-path="url(#h10)" d="M156.5 232.5L186.5 202.5M161.5 232.5L191.5 202.5M166.5 232.5L196.5 202.5M171.5 232.5L201.5 202.5M176.5 232.5L206.5 202.5M181.5 232.5L211.5 202.5M186.5 232.5L216.5 202.5M191.5 232.5L221.5 202.5M196.5 232.5L226.5 202.5M201.5 232.5L231.5 202.5M206.5 232.5L236.5 202.5M211.5 232.5L241.5 202.5M216.5 232.5L246.5 202.5M221.5 232.5L251.5 202.5M226.5 232.5L256.5 202.5M231.5 232.5L261.5 202.5M236.5 232.5L266.5 202.5M241.5 232.5L271.5 202.5M246.5 232.5L276.5 202.5M251.5 232.5L281.5 202.5M256.5 232.5L286.5 202.5M261.5 232.5L291.5 202.5M266.5 232.5L296.5 202.5M271.5 232.5L301.5 202.5M276.5 232.5L306.5 202.5M281.5 232.5L311.5 202.5M286.5 232.5L316.5 202.5M291.5 232.5L321.5 202.5M296.5 232.5L326.5 202.5M301.5 232.5L331.5 202.5M306.5 232.5L336.5 202.5M311.5 232.5L341.5 202.5M316.5 232.5L346.5 202.5M321.5 232.5L351.5 202.5M326.5 232.5L356.5 202.5M331.5 232.5L361.5 202.5M336.5 232.5L366.5 202.5M341.5 232.5L371.5 202.5M346.5 232.5L376.5 202.5M351.5 232.5L381.5 202.5M356.5 232.5L386.5 202.5M361.5 232.5L391.5 202.5M366.5 232.5L396.5 202.5M371.5 232.5L401.5 202.5M376.5 232.5L406.5 202.5M381.5 232.5L411.5 202.5M386.5 232.5L416.5 202.5M391.5 232.5L421.5 202.5" stroke="#0f0" stroke-width="1" fill="none"/>
<path clip-path="url(#h11)" d="M82.5 232.5L185.5 335.5M87.5 232.5L190.5 335.5M92.5 232.5L195.5 335.5M97.5 232.5L200.5 335.5M102.5 232.5L205.5 335.5M107.5 232.5L210.5 335.5M112.5 232.5L215.5 335.5M117.5 232.5L220.5 335.5M122.5 232.5L225.5 335.5M127.5 232.5L230.5 335.5M132.5 232.5L235.5 335.5M137.5 232.5L240.5 335.5M142.5 232.5L245.5 335.5M147.5 232.5L250.5 335.5M152.5 232.5L255.5 335.5M157.5 232.5L260.5 335.5M162.5 232.5L265.5 335.5M167.5 232.5L270.5 335.5M172.5 232.5L275.5 335.5M177.5 232.5L280.5 335.5M182.5 232.5L285.5 335.5M187.5 232.5L290.5 335.5M192.5 232.5L295.5 335.5M197.5 232.5L300.5 335.5M202.5 232.5L305.5 335.5M207.5 232.5L310.5 335.5M212.5 232.5L315.5 335.5M217.5 232.5L320.5 335.5M222.5 232.5L325.5 335.5M227.5 232.5L330.5 335.5" stroke="#0f0" stroke-width="1" fill="none"/>
<path clip-path="url(#h12)" d="M220.5 324.5L230.5 314.5M225.5 324.5L235.5 314.5M230.5 324.5L240.5 314.5M235.5 324.5L245.5 314.5M240.5 324.5L250.5 314.5M245.5 324.5L255.5 314.5M250.5 324.5L260.5 314.5M255.5 324.5L265.5 314.5M260.5 324.5L270.5 314.5M265.5 324.5L275.5 314.5M270.5 324.5L280.5 314.5M275.5 324.5L285.5 314.5M280.5 324.5L290.5 314.5M285.5 324.5L295.5 314.5M290.5 324.5L300.5 314.5M295.5 324.5L305.5 314.5M300.5 324.5L310.5 314.5M305.5 324.5L315.5 314.5M310.5 324.5L320.5 314.5M315.5 324.5L325.5 314.5M320.5 324.5L330.5 314.5M325.5 324.5L335.5 314.5M330.5 324.5L340.5 314.5M335.5 324.5L345.5 314.5M340.5 324.5L350.5 314.5M345.5 324.5L355.5 314.5M350.5 324.5L360.5 314.5" stroke="#0f0" stroke-width="1" fill="none"/>
<path clip-path="url(#h13)" d="M215.5 324.5L226.5 335.5M220.5 324.5L231.5 335.5M225.5 324.5L236.5 335.5M230.5 324.5L241.5 335.5M235.5 324.5L246.5 335.5M240.5 324.5L251.5 335.5M245.5 324.5L256.5 335.5M250.5 324.5L261.5 335.5M255.5 324.5L266.5 335.5M260.5 324.5L271.5 335.5M265.5 324.5L276.5 335.5M270.5 324.5L281.5 335.5M275.5 324.5L286.5 335.5M280.5 324.5L291.5 335.5M285.5 324.5L296.5 335.5M290.5 324.5L301.5 335.5M295.5 324.5L306.5 335.5M300.5 324.5L311.5 335.5M305.5 324.5L316.5 335.5M310.5 324.5L321.5 335.5M315.5 324.5L326.5 335.5M320.5 324.5L331.5 335.5M325.5 324.5L336.5 335.5M330.5 324.5L341.5 335.5M335.5 324.5L346.5 335.5M340.5 324.5L351.5 335.5M345.5 324.5L356.5 335.5M350.5 324.5L361.5 335.5" stroke="#0f0" stroke-width="1" fill="none"/>
<path clip-path="url(#h14)" d="M138.5 335.5L166.5 363.5M143.5 335.5L171.5 363.5M148.5 335.5L176.5 363.5M153.5 335.5L181.5 363.5M158.5 335.5L186.5 363.5M163.5 335.5L191.5 363.5M168.5 335.5L196.5 363.5M173.5 335.5L201.5 363.5M178.5 335.5L206.5 363.5M183.5 335.5L211.5 363.5M188.5 335.5L216.5 363.5M193.5 335.5L221.5 363.5M198.5 335.5L226.5 363.5M203.5 335.5L231.5 363.5M208.5 335.5L236.5 363.5M213.5 335.5L241.5 363.5M218.5 335.5L246.5 363.5M223.5 335.5L251.5 363.5M228.5 335.5L256.5 363.5M233.5 335.5L261.5 363.5M238.5 335.5L266.5 363.5M243.5 335.5L271.5 363.5M248.5 335.5L276.5 363.5M253.5 335.5L281.5 363.5M258.5 335.5L286.5 363.5M263.5 335.5L291.5 363.5" stroke="#0f0" stroke-width="1" fill="none"/>
<path clip-path="url(#h15)" d="M286.5 335.5L314.5 363.5M291.5 335.5L319.5 363.5M296.5 335.5L324.5 363.5M301.5 335.5L329.5 363.5M306.5 335.5L334.5 363.5M311.5 335.5L339.5 363.5M316.5 335.5L344.5 363.5M321.5 335.5L349.5 363.5M326.5 335.5L354.5 363.5M331.5 335.5L359.5 363.5M336.5 335.5L364.5 363.5M341.5 335.5L369.5 363.5M346.5 335.5L374.5 363.5M351.5 335.5L379.5 363.5M356.5 335.5L384.5 363.5M361.5 335.5L389.5 363.5M366.5 335.5L394.5 363.5M371.5 335.5L399.5 363.5M376.5 335.5L404.5 363.5M381.5 335.5L409.5 363.5M386.5 335.5L414.5 363.5M391.5 335.5L419.5 363.5M396.5 335.5L424.5 363.5M401.5 335.5L429.5 363.5M406.5 335.5L434.5 363.5M411.5 335.5L439.5 363.5M416.5 335.5L444.5 363.5" stroke="#0f0" stroke-width="1" fill="none"/>
<path clip-path="url(#hb)" d="M242.5 266.5L342.5 366.5M247.5 266.5L347.5 366.5M252.5 266.5L352.5 366.5M257.5 266.5L357.5 366.5M262.5 266.5L362.5 366.5M267.5 266.5L367.5 366.5M272.5 266.5L372.5 366.5M277.5 266.5L377.5 366.5M282.5 266.5L382.5 366.5M287.5 266.5L387.5 366.5M292.5 266.5L392.5 366.5M297.5 266.5L397.5 366.5M302.5 266.5L402.5 366.5M307.5 266.5L407.5 366.5M312.5 266.5L412.5 366.5M317.5 266.5L417.5 366.5M322.5 266.5L422.5 366.5M327.5 266.5L427.5 366.5M332.5 266.5L432.5 366.5M337.5 266.5L437.5 366.5M342.5 266.5L442.5 366.5M347.5 266.5L447.5 366.5M352.5 266.5L452.5 366.5M357.5 266.5L457.5 366.5M362.5 266.5L462.5 366.5M367.5 266.5L467.5 366.5M372.5 266.5L472.5 366.5M377.5 266.5L477.5 366.5M382.5 266.5L482.5 366.5M387.5 266.5L487.5 366.5M392.5 266.5L492.5 366.5M397.5 266.5L497.5 366.5" stroke="#0f0" stroke-width="1" fill="none"/>
<rect x="166" y="67" width="251" height="1" fill="#0ff"/>
<rect x="166" y="81" width="251" height="1" fill="#0ff"/>
<rect x="166" y="67" width="1" height="15" fill="#0ff"/>
<rect x="416" y="67" width="1" height="15" fill="#0ff"/>
<rect x="415" y="67" width="1" height="15" fill="#0ff"/>
<rect x="187" y="81" width="1" height="254" fill="#0ff"/>
<rect x="394" y="81" width="1" height="254" fill="#0ff"/>
<rect x="187" y="176" width="208" height="1" fill="#0ff"/>
<rect x="213" y="177" width="182" height="1" fill="#0ff"/>
<rect x="187" y="186" width="208" height="2" fill="#0ff"/>
<rect x="187" y="201" width="208" height="1" fill="#0ff"/>
<rect x="187" y="231" width="208" height="1" fill="#0ff"/>
<rect x="187" y="171" width="15" height="2" fill="#0ff"/>
<rect x="166" y="334" width="251" height="1" fill="#0ff"/>
<rect x="166" y="362" width="251" height="1" fill="#0ff"/>
<rect x="166" y="334" width="1" height="29" fill="#0ff"/>
<rect x="416" y="334" width="1" height="29" fill="#0ff"/>
<rect x="166" y="361" width="251" height="1" fill="#0ff"/>
<rect x="267" y="334" width="1" height="29" fill="#0ff"/>
<rect x="315" y="334" width="1" height="29" fill="#0ff"/>
<rect x="227" y="231" width="2" height="104" fill="#0ff"/>
<rect x="355" y="231" width="2" height="104" fill="#0ff"/>
<rect x="230" y="313" width="123" height="1" fill="#0ff"/>
<rect x="230" y="334" width="123" height="1" fill="#0ff"/>
<rect x="230" y="313" width="1" height="22" fill="#0ff"/>
<rect x="352" y="313" width="1" height="22" fill="#0ff"/>
<rect x="230" y="324" width="123" height="1" fill="#0ff"/>
<rect x="278" y="105" width="4" height="93" fill="#0ff"/>
<rect x="300" y="105" width="4" height="93" fill="#0ff"/>
<rect x="282" y="132" width="18" height="65" fill="#000"/>
<rect x="291" y="29" width="1" height="38" fill="#0ff"/>
<rect x="247" y="104" width="35" height="3" fill="#0ff"/>
<rect x="300" y="104" width="17" height="4" fill="#0ff"/>
<rect x="317" y="104" width="19" height="2" fill="#0ff"/>
<rect x="279" y="104" width="3" height="73" fill="#0ff"/>
<rect x="300" y="104" width="3" height="73" fill="#0ff"/>
<polyline points="335.5,107 336,126 341,145 350,164 351.5,176" fill="none" stroke="#0ff" stroke-width="1"/>
<rect x="235" y="81" width="1" height="23" fill="#0ff"/>
<rect x="335" y="81" width="1" height="25" fill="#0ff"/>
<rect x="245" y="167" width="1" height="21" fill="#0ff"/>
<rect x="336" y="167" width="1" height="21" fill="#0ff"/>
<circle cx="264" cy="98" r="3.6" fill="#000" stroke="#0ff" stroke-width="1"/>
<circle cx="318.5" cy="98" r="3.6" fill="#000" stroke="#0ff" stroke-width="1"/>
<circle cx="262.5" cy="127" r="3.6" fill="#000" stroke="#0ff" stroke-width="1"/>
<circle cx="262.5" cy="161" r="3.6" fill="#000" stroke="#0ff" stroke-width="1"/>
<circle cx="320" cy="127" r="3.6" fill="#000" stroke="#0ff" stroke-width="1"/>
<circle cx="320" cy="161" r="3.6" fill="#000" stroke="#0ff" stroke-width="1"/>
<rect x="261" y="62" width="62" height="1" fill="#0ff"/>
<rect x="261" y="67" width="62" height="1" fill="#0ff"/>
<rect x="261" y="62" width="1" height="6" fill="#0ff"/>
<rect x="322" y="62" width="1" height="6" fill="#0ff"/>
<rect x="261" y="63" width="62" height="1" fill="#0ff"/>
<rect x="262" y="62" width="1" height="6" fill="#0ff"/>
<rect x="321" y="62" width="1" height="6" fill="#0ff"/>
<rect x="275" y="62" width="2" height="11" fill="#0ff"/>
<rect x="306" y="62" width="2" height="11" fill="#0ff"/>
<rect x="268" y="70" width="9" height="2" fill="#0ff"/>
<rect x="307" y="70" width="8" height="2" fill="#0ff"/>
<rect x="275" y="64" width="33" height="2" fill="#0ff"/>
<rect x="275" y="72" width="9" height="2" fill="#0ff"/>
<rect x="300" y="72" width="8" height="2" fill="#0ff"/>
<rect x="281" y="72" width="2" height="33" fill="#0ff"/>
<rect x="299" y="72" width="2" height="33" fill="#0ff"/>
<polygon points="290,65 293,65 296.5,104 286.5,104" fill="#0ff" stroke="#0ff" stroke-width="1"/>
<polygon points="291,74 292.5,74 295,103 288.5,103" fill="#000" stroke="#000" stroke-width="1"/>
<rect x="291" y="74" width="1" height="6" fill="#0ff"/>
<rect x="291" y="82" width="1" height="6" fill="#0ff"/>
<rect x="291" y="90" width="1" height="6" fill="#0ff"/>
<rect x="291" y="98" width="1" height="6" fill="#0ff"/>
<path d="M285 105 L285 116 Q285 124 291.5 124 Q298 124 298 116 L298 105" fill="none" stroke="#0ff" stroke-width="1"/>
<rect x="286" y="112" width="12" height="1" fill="#0ff"/>
<rect x="197" y="67" width="20" height="8" fill="#0ff"/>
<rect x="201" y="68" width="13" height="5" fill="#000"/>
<polygon points="202,75 212.5,75 212.5,97 207.5,103 202,97" fill="#0ff" stroke="#0ff" stroke-width="1"/>
<rect x="205" y="77" width="5" height="15" fill="#000"/>
<rect x="205" y="94" width="5" height="3" fill="#000"/>
<rect x="207" y="76" width="1" height="23" fill="#0ff"/>
<rect x="205" y="80" width="6" height="1" fill="#0ff"/>
<rect x="205" y="84" width="6" height="1" fill="#000"/>
<rect x="207" y="58" width="1" height="58" fill="#0ff"/>
<rect x="364" y="69" width="11" height="108" fill="#0ff"/>
<rect x="367" y="177" width="1" height="20" fill="#0ff"/>
<rect x="372" y="177" width="1" height="20" fill="#0ff"/>
<rect x="368" y="72" width="4" height="22" fill="#000"/>
<rect x="368" y="96" width="4" height="11" fill="#000"/>
<rect x="368" y="110" width="4" height="14" fill="#000"/>
<rect x="368" y="126" width="4" height="60" fill="#000"/>
<rect x="368" y="187" width="4" height="9" fill="#000"/>
<rect x="369" y="55" width="1" height="9" fill="#0ff"/>
<rect x="369" y="66" width="1" height="2" fill="#0ff"/>
<rect x="369" y="70" width="1" height="9" fill="#0ff"/>
<rect x="369" y="81" width="1" height="2" fill="#0ff"/>
<rect x="369" y="85" width="1" height="9" fill="#0ff"/>
<rect x="369" y="96" width="1" height="2" fill="#0ff"/>
<rect x="369" y="100" width="1" height="9" fill="#0ff"/>
<rect x="369" y="111" width="1" height="2" fill="#0ff"/>
<rect x="369" y="115" width="1" height="9" fill="#0ff"/>
<rect x="369" y="126" width="1" height="2" fill="#0ff"/>
<rect x="369" y="130" width="1" height="9" fill="#0ff"/>
<rect x="369" y="141" width="1" height="2" fill="#0ff"/>
<rect x="369" y="145" width="1" height="9" fill="#0ff"/>
<rect x="369" y="156" width="1" height="2" fill="#0ff"/>
<rect x="369" y="160" width="1" height="9" fill="#0ff"/>
<rect x="369" y="171" width="1" height="2" fill="#0ff"/>
<rect x="369" y="175" width="1" height="9" fill="#0ff"/>
<rect x="369" y="186" width="1" height="2" fill="#0ff"/>
<rect x="369" y="190" width="1" height="9" fill="#0ff"/>
<rect x="369" y="201" width="1" height="2" fill="#0ff"/>
<rect x="369" y="205" width="1" height="3" fill="#0ff"/>
<rect x="365" y="82" width="1" height="1" fill="#000"/>
<rect x="365" y="85" width="1" height="1" fill="#000"/>
<rect x="365" y="88" width="1" height="1" fill="#000"/>
<rect x="365" y="91" width="1" height="1" fill="#000"/>
<rect x="365" y="94" width="1" height="1" fill="#000"/>
<rect x="365" y="97" width="1" height="1" fill="#000"/>
<rect x="365" y="100" width="1" height="1" fill="#000"/>
<rect x="365" y="103" width="1" height="1" fill="#000"/>
<rect x="365" y="106" width="1" height="1" fill="#000"/>
<rect x="365" y="109" width="1" height="1" fill="#000"/>
<rect x="365" y="112" width="1" height="1" fill="#000"/>
<rect x="365" y="115" width="1" height="1" fill="#000"/>
<rect x="365" y="118" width="1" height="1" fill="#000"/>
<rect x="365" y="121" width="1" height="1" fill="#000"/>
<rect x="365" y="124" width="1" height="1" fill="#000"/>
<rect x="365" y="127" width="1" height="1" fill="#000"/>
<rect x="365" y="130" width="1" height="1" fill="#000"/>
<rect x="365" y="133" width="1" height="1" fill="#000"/>
<rect x="365" y="136" width="1" height="1" fill="#000"/>
<rect x="365" y="139" width="1" height="1" fill="#000"/>
<rect x="365" y="142" width="1" height="1" fill="#000"/>
<rect x="365" y="145" width="1" height="1" fill="#000"/>
<rect x="365" y="148" width="1" height="1" fill="#000"/>
<rect x="365" y="151" width="1" height="1" fill="#000"/>
<rect x="365" y="154" width="1" height="1" fill="#000"/>
<rect x="365" y="157" width="1" height="1" fill="#000"/>
<rect x="365" y="160" width="1" height="1" fill="#000"/>
<rect x="365" y="163" width="1" height="1" fill="#000"/>
<rect x="365" y="166" width="1" height="1" fill="#000"/>
<rect x="365" y="169" width="1" height="1" fill="#000"/>
<rect x="365" y="172" width="1" height="1" fill="#000"/>
<rect x="365" y="175" width="1" height="1" fill="#000"/>
<rect x="364" y="69" width="1" height="1" fill="#000"/>
<rect x="374" y="69" width="1" height="1" fill="#000"/>
<rect x="360" y="196" width="19" height="6" fill="#0ff"/>
<rect x="362" y="198" width="7" height="3" fill="#000"/>
<rect x="371" y="198" width="6" height="3" fill="#000"/>
<rect x="362" y="85" width="3" height="1" fill="#0ff"/>
<rect x="375" y="85" width="3" height="1" fill="#0ff"/>
<polyline points="320.5,82 325.5,91" fill="none" stroke="#0ff" stroke-width="3"/>
<line x1="324.5" y1="90" x2="340" y2="83.3" stroke="#0ff" stroke-width="1"/>
<line x1="328.5" y1="88.5" x2="336.5" y2="103.5" stroke="#0ff" stroke-width="1"/>
<line x1="331.5" y1="87" x2="339.5" y2="101" stroke="#0ff" stroke-width="1"/>
<line x1="326" y1="90" x2="333.5" y2="104" stroke="#0ff" stroke-width="1"/>
<path d="M339 84 Q350 90 339 98" fill="none" stroke="#0ff" stroke-width="1"/>
<g clip-path="url(#bc)">
<polygon points="238.36,99.16 204.16,186.16 210.67,188.72 244.87,101.72" fill="#0ff" stroke="#0ff" stroke-width="1"/>
<line x1="236.41" y1="98.39" x2="202.21" y2="185.39" stroke="#0ff" stroke-width="1"/>
<line x1="241.06" y1="104.22" x2="206.86" y2="185.22" stroke="#000" stroke-width="1.2" stroke-dasharray="1.2 1.7" stroke-dashoffset="0"/>
<line x1="242.92" y1="104.95" x2="208.72" y2="185.95" stroke="#000" stroke-width="1.2" stroke-dasharray="1.2 1.7" stroke-dashoffset="1.3"/>
</g>
<line x1="246.6" y1="88" x2="241.1" y2="103.5" stroke="#0ff" stroke-width="1"/>
<line x1="249.6" y1="88" x2="244.1" y2="103.5" stroke="#0ff" stroke-width="1"/>
<line x1="252.7" y1="88" x2="247.3" y2="104" stroke="#0ff" stroke-width="1.6"/>
<polyline points="243.2,82.8 254.9,89.2" fill="none" stroke="#0ff" stroke-width="2"/>
<polyline points="259.5,82.5 257,91.5" fill="none" stroke="#0ff" stroke-width="3"/>
<line x1="252.5" y1="83.3" x2="251" y2="87.2" stroke="#0ff" stroke-width="1"/>
<line x1="206" y1="187" x2="199.5" y2="201" stroke="#0ff" stroke-width="1"/>
<line x1="209" y1="187" x2="204" y2="201" stroke="#0ff" stroke-width="1"/>
<rect x="320" y="176" width="9" height="19" fill="#0ff"/>
<rect x="322" y="178" width="2" height="1" fill="#000"/>
<rect x="325" y="179" width="2" height="1" fill="#000"/>
<rect x="322" y="181" width="2" height="1" fill="#000"/>
<rect x="325" y="182" width="2" height="1" fill="#000"/>
<rect x="322" y="184" width="2" height="1" fill="#000"/>
<rect x="325" y="185" width="2" height="1" fill="#000"/>
<rect x="322" y="187" width="2" height="1" fill="#000"/>
<rect x="325" y="188" width="2" height="1" fill="#000"/>
<rect x="322" y="190" width="2" height="1" fill="#000"/>
<rect x="325" y="191" width="2" height="1" fill="#000"/>
<rect x="322" y="193" width="2" height="1" fill="#000"/>
<rect x="325" y="194" width="2" height="1" fill="#000"/>
<rect x="198" y="201" width="19" height="7" fill="#0ff"/>
<rect x="201" y="203" width="14" height="4" fill="#000"/>
<rect x="205" y="208" width="5" height="153" fill="#000"/>
<rect x="203" y="208" width="2" height="154" fill="#0ff"/>
<rect x="210" y="208" width="2" height="154" fill="#0ff"/>
<rect x="207" y="209" width="1" height="16" fill="#0ff"/>
<rect x="207" y="228" width="1" height="3" fill="#0ff"/>
<rect x="207" y="234" width="1" height="16" fill="#0ff"/>
<rect x="207" y="253" width="1" height="3" fill="#0ff"/>
<rect x="207" y="259" width="1" height="16" fill="#0ff"/>
<rect x="207" y="278" width="1" height="3" fill="#0ff"/>
<rect x="207" y="284" width="1" height="16" fill="#0ff"/>
<rect x="207" y="303" width="1" height="3" fill="#0ff"/>
<rect x="207" y="309" width="1" height="16" fill="#0ff"/>
<rect x="207" y="328" width="1" height="3" fill="#0ff"/>
<rect x="207" y="334" width="1" height="16" fill="#0ff"/>
<rect x="207" y="353" width="1" height="3" fill="#0ff"/>
<rect x="207" y="359" width="1" height="3" fill="#0ff"/>
<rect x="205" y="228" width="5" height="1" fill="#0ff"/>
<rect x="205" y="261" width="5" height="1" fill="#0ff"/>
<rect x="205" y="228" width="1" height="34" fill="#0ff"/>
<rect x="209" y="228" width="1" height="34" fill="#0ff"/>
<rect x="203" y="264" width="9" height="2" fill="#0ff"/>
<rect x="203" y="287" width="9" height="2" fill="#0ff"/>
<rect x="203" y="296" width="9" height="3" fill="#0ff"/>
<rect x="203" y="350" width="9" height="3" fill="#0ff"/>
<rect x="243" y="188" width="7" height="44" fill="#000"/>
<rect x="244" y="232" width="4" height="91" fill="#000"/>
<rect x="240" y="188" width="3" height="44" fill="#0ff"/>
<rect x="250" y="188" width="3" height="44" fill="#0ff"/>
<rect x="242" y="232" width="2" height="92" fill="#0ff"/>
<rect x="248" y="232" width="2" height="92" fill="#0ff"/>
<rect x="246" y="188" width="1" height="9" fill="#0ff"/>
<rect x="246" y="200" width="1" height="3" fill="#0ff"/>
<rect x="246" y="206" width="1" height="14" fill="#0ff"/>
<rect x="246" y="223" width="1" height="3" fill="#0ff"/>
<rect x="246" y="229" width="1" height="14" fill="#0ff"/>
<rect x="246" y="246" width="1" height="3" fill="#0ff"/>
<rect x="246" y="252" width="1" height="14" fill="#0ff"/>
<rect x="246" y="269" width="1" height="3" fill="#0ff"/>
<rect x="246" y="275" width="1" height="14" fill="#0ff"/>
<rect x="246" y="292" width="1" height="3" fill="#0ff"/>
<rect x="246" y="298" width="1" height="14" fill="#0ff"/>
<rect x="246" y="315" width="1" height="3" fill="#0ff"/>
<rect x="246" y="321" width="1" height="14" fill="#0ff"/>
<rect x="246" y="338" width="1" height="2" fill="#0ff"/>
<rect x="236" y="322" width="20" height="2" fill="#0ff"/>
<rect x="333" y="188" width="7" height="44" fill="#000"/>
<rect x="334" y="232" width="4" height="91" fill="#000"/>
<rect x="330" y="188" width="3" height="44" fill="#0ff"/>
<rect x="340" y="188" width="3" height="44" fill="#0ff"/>
<rect x="332" y="232" width="2" height="92" fill="#0ff"/>
<rect x="338" y="232" width="2" height="92" fill="#0ff"/>
<rect x="336" y="188" width="1" height="9" fill="#0ff"/>
<rect x="336" y="200" width="1" height="3" fill="#0ff"/>
<rect x="336" y="206" width="1" height="14" fill="#0ff"/>
<rect x="336" y="223" width="1" height="3" fill="#0ff"/>
<rect x="336" y="229" width="1" height="14" fill="#0ff"/>
<rect x="336" y="246" width="1" height="3" fill="#0ff"/>
<rect x="336" y="252" width="1" height="14" fill="#0ff"/>
<rect x="336" y="269" width="1" height="3" fill="#0ff"/>
<rect x="336" y="275" width="1" height="14" fill="#0ff"/>
<rect x="336" y="292" width="1" height="3" fill="#0ff"/>
<rect x="336" y="298" width="1" height="14" fill="#0ff"/>
<rect x="336" y="315" width="1" height="3" fill="#0ff"/>
<rect x="336" y="321" width="1" height="14" fill="#0ff"/>
<rect x="336" y="338" width="1" height="2" fill="#0ff"/>
<rect x="326" y="322" width="20" height="2" fill="#0ff"/>
<rect x="287" y="202" width="8" height="121" fill="#000"/>
<rect x="285" y="201" width="2" height="123" fill="#0ff"/>
<rect x="295" y="201" width="2" height="123" fill="#0ff"/>
<rect x="273" y="197" width="36" height="5" fill="#0ff"/>
<rect x="276" y="198" width="31" height="3" fill="#000"/>
<rect x="291" y="197" width="1" height="5" fill="#0ff"/>
<rect x="281" y="322" width="21" height="2" fill="#0ff"/>
<rect x="291" y="132" width="1" height="14" fill="#0ff"/>
<rect x="291" y="149" width="1" height="3" fill="#0ff"/>
<rect x="291" y="155" width="1" height="14" fill="#0ff"/>
<rect x="291" y="172" width="1" height="3" fill="#0ff"/>
<rect x="291" y="178" width="1" height="14" fill="#0ff"/>
<rect x="291" y="195" width="1" height="3" fill="#0ff"/>
<rect x="291" y="201" width="1" height="14" fill="#0ff"/>
<rect x="291" y="218" width="1" height="3" fill="#0ff"/>
<rect x="291" y="224" width="1" height="14" fill="#0ff"/>
<rect x="291" y="241" width="1" height="3" fill="#0ff"/>
<rect x="291" y="247" width="1" height="14" fill="#0ff"/>
<rect x="291" y="264" width="1" height="3" fill="#0ff"/>
<rect x="291" y="270" width="1" height="14" fill="#0ff"/>
<rect x="291" y="287" width="1" height="3" fill="#0ff"/>
<rect x="291" y="293" width="1" height="14" fill="#0ff"/>
<rect x="291" y="310" width="1" height="3" fill="#0ff"/>
<rect x="291" y="316" width="1" height="14" fill="#0ff"/>
<rect x="291" y="333" width="1" height="3" fill="#0ff"/>
<rect x="291" y="339" width="1" height="14" fill="#0ff"/>
<rect x="291" y="356" width="1" height="3" fill="#0ff"/>
<rect x="291" y="362" width="1" height="4" fill="#0ff"/>
<rect x="380" y="186" width="9" height="4" fill="#0ff"/>
<rect x="382" y="190" width="6" height="29" fill="#0ff"/>
<rect x="384" y="192" width="2" height="22" fill="#000"/>
<path d="M378 186 L378 215 Q378 222 385 222 Q392 222 392 215 L392 186" fill="none" stroke="#0ff" stroke-width="1"/>
<rect x="375" y="201" width="1" height="14" fill="#0ff"/>
<rect x="375" y="218" width="1" height="3" fill="#0ff"/>
<rect x="375" y="224" width="1" height="14" fill="#0ff"/>
<rect x="375" y="241" width="1" height="3" fill="#0ff"/>
<rect x="375" y="247" width="1" height="14" fill="#0ff"/>
<rect x="375" y="264" width="1" height="3" fill="#0ff"/>
<path d="M375 266 C384 266 391 272 391 285 C391 300 387 312 386 328 C386 343 392 352 396 362 L355 362 C359 352 365 343 364 328 C364 312 361 300 361 285 C361 272 367 266 375 266Z" fill="none" stroke="#0f0" stroke-width="1"/>
<rect x="371" y="280" width="9" height="72" fill="#0ff"/>
<polygon points="371,280 375.5,276 380,280" fill="#0ff" stroke="#0ff" stroke-width="1"/>
<rect x="373" y="284" width="5" height="66" fill="#000"/>
<rect x="375" y="278" width="1" height="79" fill="#0ff"/>
<rect x="373" y="340" width="5" height="2" fill="#0ff"/>
<rect x="373" y="283" width="5" height="2" fill="#0ff"/>
<rect x="368" y="352" width="15" height="9" fill="#0ff"/>
<rect x="370" y="355" width="11" height="6" fill="#000"/>
<rect x="417" y="67" width="46" height="1" fill="#0f0"/>
<rect x="417" y="362" width="46" height="1" fill="#0f0"/>
<rect x="460" y="67" width="1" height="296" fill="#0f0"/>
<rect x="455" y="211" width="6" height="8" fill="#0f0"/>
<rect x="166" y="375" width="250" height="1" fill="#0f0"/>
<rect x="166" y="362" width="1" height="16" fill="#0f0"/>
<rect x="415" y="362" width="1" height="16" fill="#0f0"/>
<rect x="287" y="371" width="7" height="5" fill="#0f0"/>
<rect x="268" y="57" width="47" height="1" fill="#0f0"/>
<rect x="268" y="55" width="1" height="16" fill="#0f0"/>
<rect x="314" y="55" width="1" height="16" fill="#0f0"/>
<rect x="132" y="57" width="5" height="5" fill="#0f0"/>
<rect x="132" y="61" width="9" height="1" fill="#0f0"/>
<line x1="140" y1="61.5" x2="200" y2="78" stroke="#0f0" stroke-width="1"/>
<rect x="132" y="72" width="5" height="5" fill="#0f0"/>
<rect x="132" y="76" width="9" height="1" fill="#0f0"/>
<line x1="140" y1="76.5" x2="262" y2="127" stroke="#0f0" stroke-width="1"/>
<rect x="132" y="105" width="5" height="5" fill="#0f0"/>
<rect x="132" y="109" width="9" height="1" fill="#0f0"/>
<line x1="140" y1="109.5" x2="246" y2="171" stroke="#0f0" stroke-width="1"/>
<rect x="132" y="127" width="5" height="5" fill="#0f0"/>
<rect x="132" y="131" width="9" height="1" fill="#0f0"/>
<line x1="140" y1="131.5" x2="210" y2="178" stroke="#0f0" stroke-width="1"/>
<rect x="132" y="146" width="5" height="5" fill="#0f0"/>
<rect x="132" y="150" width="9" height="1" fill="#0f0"/>
<line x1="140" y1="150.5" x2="196" y2="182" stroke="#0f0" stroke-width="1"/>
<rect x="132" y="158" width="5" height="5" fill="#0f0"/>
<rect x="132" y="162" width="9" height="1" fill="#0f0"/>
<line x1="140" y1="162.5" x2="195" y2="194" stroke="#0f0" stroke-width="1"/>
<rect x="132" y="179" width="5" height="5" fill="#0f0"/>
<rect x="132" y="183" width="9" height="1" fill="#0f0"/>
<line x1="140" y1="183.5" x2="197" y2="215" stroke="#0f0" stroke-width="1"/>
<rect x="132" y="210" width="5" height="5" fill="#0f0"/>
<rect x="132" y="214" width="9" height="1" fill="#0f0"/>
<line x1="140" y1="214.5" x2="206" y2="245" stroke="#0f0" stroke-width="1"/>
<rect x="131" y="233" width="5" height="5" fill="#0f0"/>
<rect x="131" y="237" width="9" height="1" fill="#0f0"/>
<line x1="139" y1="237.5" x2="207" y2="262" stroke="#0f0" stroke-width="1"/>
<rect x="134" y="274" width="5" height="5" fill="#0f0"/>
<rect x="134" y="278" width="9" height="1" fill="#0f0"/>
<line x1="142" y1="278.5" x2="209" y2="314" stroke="#0f0" stroke-width="1"/>
<rect x="226" y="49" width="5" height="5" fill="#0f0"/>
<line x1="227" y1="54" x2="206.5" y2="71" stroke="#0f0" stroke-width="1"/>
<rect x="239" y="50" width="5" height="5" fill="#0f0"/>
<line x1="243" y1="55" x2="265" y2="91" stroke="#0f0" stroke-width="1"/>
<rect x="268" y="40" width="11" height="5" fill="#0f0"/>
<line x1="279" y1="45" x2="291" y2="61" stroke="#0f0" stroke-width="1"/>
<rect x="283" y="50" width="14" height="6" fill="#0f0"/>
<rect x="314" y="46" width="5" height="5" fill="#0f0"/>
<rect x="310" y="50" width="5" height="1" fill="#0f0"/>
<line x1="310" y1="50" x2="293" y2="71" stroke="#0f0" stroke-width="1"/>
<rect x="326" y="51" width="6" height="5" fill="#0f0"/>
<rect x="322" y="55" width="5" height="1" fill="#0f0"/>
<line x1="322" y1="55" x2="311" y2="67" stroke="#0f0" stroke-width="1"/>
<rect x="351" y="53" width="6" height="5" fill="#0f0"/>
<line x1="351" y1="57" x2="321" y2="66" stroke="#0f0" stroke-width="1"/>
<rect x="396" y="57" width="8" height="1" fill="#0f0"/>
<line x1="396" y1="57.5" x2="370" y2="67" stroke="#0f0" stroke-width="1"/>
<rect x="401" y="54" width="2" height="3" fill="#0f0"/>
<rect x="434" y="59" width="8" height="1" fill="#0f0"/>
<line x1="434" y1="59.5" x2="300" y2="127" stroke="#0f0" stroke-width="1"/>
<rect x="439" y="56" width="2" height="3" fill="#0f0"/>
<rect x="434" y="107" width="8" height="1" fill="#0f0"/>
<line x1="434" y1="107.5" x2="373" y2="139" stroke="#0f0" stroke-width="1"/>
<rect x="439" y="104" width="2" height="3" fill="#0f0"/>
<rect x="434" y="142" width="8" height="1" fill="#0f0"/>
<line x1="434" y1="142.5" x2="372" y2="177" stroke="#0f0" stroke-width="1"/>
<rect x="439" y="139" width="2" height="3" fill="#0f0"/>
<rect x="435" y="169" width="8" height="1" fill="#0f0"/>
<line x1="435" y1="169.5" x2="291" y2="254" stroke="#0f0" stroke-width="1"/>
<rect x="440" y="166" width="2" height="3" fill="#0f0"/>
<rect x="434" y="203" width="8" height="1" fill="#0f0"/>
<line x1="434" y1="203.5" x2="336" y2="280" stroke="#0f0" stroke-width="1"/>
<rect x="439" y="200" width="2" height="3" fill="#0f0"/>
<rect x="434" y="258" width="8" height="1" fill="#0f0"/>
<line x1="434" y1="258.5" x2="350" y2="315" stroke="#0f0" stroke-width="1"/>
<rect x="439" y="255" width="2" height="3" fill="#0f0"/>
<rect x="435" y="284" width="8" height="1" fill="#0f0"/>
<line x1="435" y1="284.5" x2="351" y2="325" stroke="#0f0" stroke-width="1"/>
<rect x="440" y="281" width="2" height="3" fill="#0f0"/>
<rect x="435" y="300" width="8" height="1" fill="#0f0"/>
<line x1="435" y1="300.5" x2="344" y2="340" stroke="#0f0" stroke-width="1"/>
<rect x="440" y="297" width="2" height="3" fill="#0f0"/>
<rect x="283" y="126" width="14" height="6" fill="#0f0"/>
<rect x="377" y="96" width="14" height="6" fill="#0f0"/>
<path d="M192 67 C194 85 198 100 207.5 105 C217 100 220 85 222 67" fill="none" stroke="#0f0" stroke-width="1"/>
<rect x="222" y="67" width="1" height="15" fill="#0f0"/>
<rect x="282" y="99" width="1" height="42" fill="#0f0"/>
<rect x="299" y="99" width="1" height="6" fill="#0f0"/>
<line x1="294" y1="132" x2="322" y2="179" stroke="#0f0" stroke-width="1"/>
<rect x="364" y="102" width="14" height="1" fill="#0f0"/>
<rect x="291" y="105" width="1" height="27" fill="#0ff"/>
</svg>
</body></html>
